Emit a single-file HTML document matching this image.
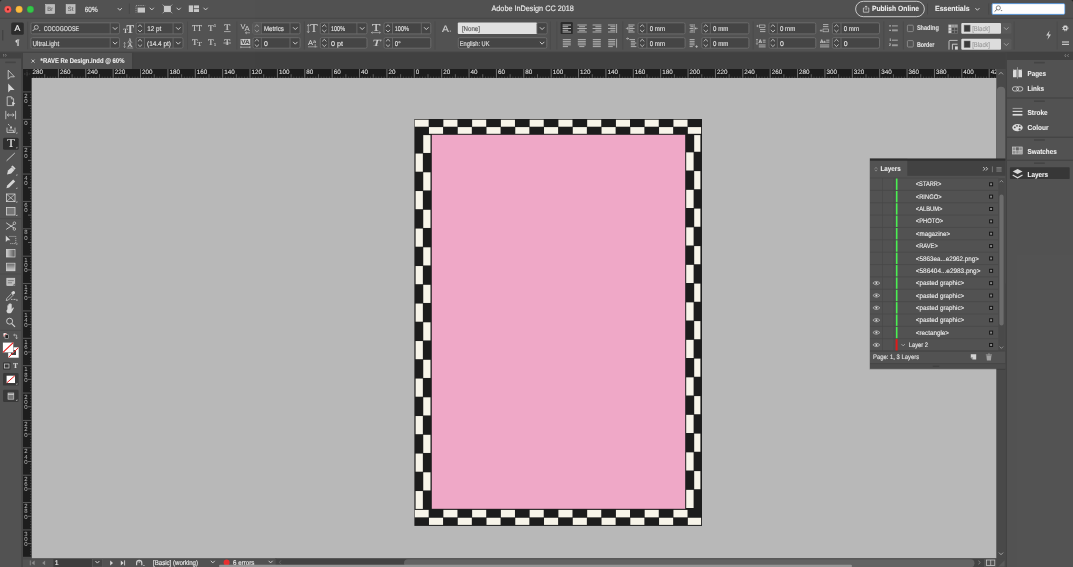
<!DOCTYPE html>
<html lang="en"><head><meta charset="utf-8"><title>Adobe InDesign CC 2018 - RAVE Re Design.indd</title>
<style>html,body{margin:0;padding:0;background:#535353;overflow:hidden}body{width:1073px;height:567px}svg{display:block;will-change:transform;opacity:0.999}text{font-family:"Liberation Sans", Arial, sans-serif;white-space:pre;text-rendering:geometricPrecision}</style></head><body>
<svg role="img" aria-label="Adobe InDesign CC 2018 workspace" width="1073" height="567" viewBox="0 0 1073 567">
<g id="base">
<rect x="0.00" y="0.00" width="1073.00" height="567.00" fill="#535353"/>
<rect x="0.00" y="52.30" width="1073.00" height="17.00" fill="#424242"/>
<rect x="31.50" y="77.90" width="965.00" height="480.70" fill="#b9b9b9"/>
</g>
<g id="page">
<rect x="414.40" y="119.00" width="287.60" height="406.90" fill="#1d1d1d"/>
<rect x="431.80" y="134.80" width="253.40" height="374.00" fill="#f0a9c8"/>
<rect x="414.80" y="119.70" width="13.88" height="7.00" fill="#f8f5ea"/>
<rect x="428.98" y="127.10" width="14.08" height="6.70" fill="#f8f5ea"/>
<rect x="443.36" y="119.70" width="14.08" height="7.00" fill="#f8f5ea"/>
<rect x="457.74" y="127.10" width="14.08" height="6.70" fill="#f8f5ea"/>
<rect x="472.12" y="119.70" width="14.08" height="7.00" fill="#f8f5ea"/>
<rect x="486.50" y="127.10" width="14.08" height="6.70" fill="#f8f5ea"/>
<rect x="500.88" y="119.70" width="14.08" height="7.00" fill="#f8f5ea"/>
<rect x="515.26" y="127.10" width="14.08" height="6.70" fill="#f8f5ea"/>
<rect x="529.64" y="119.70" width="14.08" height="7.00" fill="#f8f5ea"/>
<rect x="544.02" y="127.10" width="14.08" height="6.70" fill="#f8f5ea"/>
<rect x="558.40" y="119.70" width="14.08" height="7.00" fill="#f8f5ea"/>
<rect x="572.78" y="127.10" width="14.08" height="6.70" fill="#f8f5ea"/>
<rect x="587.16" y="119.70" width="14.08" height="7.00" fill="#f8f5ea"/>
<rect x="601.54" y="127.10" width="14.08" height="6.70" fill="#f8f5ea"/>
<rect x="615.92" y="119.70" width="14.08" height="7.00" fill="#f8f5ea"/>
<rect x="630.30" y="127.10" width="14.08" height="6.70" fill="#f8f5ea"/>
<rect x="644.68" y="119.70" width="14.08" height="7.00" fill="#f8f5ea"/>
<rect x="659.06" y="127.10" width="14.08" height="6.70" fill="#f8f5ea"/>
<rect x="673.44" y="119.70" width="14.08" height="7.00" fill="#f8f5ea"/>
<rect x="687.82" y="127.10" width="13.28" height="6.70" fill="#f8f5ea"/>
<rect x="414.80" y="509.90" width="13.88" height="7.45" fill="#f8f5ea"/>
<rect x="428.98" y="517.75" width="14.08" height="7.15" fill="#f8f5ea"/>
<rect x="443.36" y="509.90" width="14.08" height="7.45" fill="#f8f5ea"/>
<rect x="457.74" y="517.75" width="14.08" height="7.15" fill="#f8f5ea"/>
<rect x="472.12" y="509.90" width="14.08" height="7.45" fill="#f8f5ea"/>
<rect x="486.50" y="517.75" width="14.08" height="7.15" fill="#f8f5ea"/>
<rect x="500.88" y="509.90" width="14.08" height="7.45" fill="#f8f5ea"/>
<rect x="515.26" y="517.75" width="14.08" height="7.15" fill="#f8f5ea"/>
<rect x="529.64" y="509.90" width="14.08" height="7.45" fill="#f8f5ea"/>
<rect x="544.02" y="517.75" width="14.08" height="7.15" fill="#f8f5ea"/>
<rect x="558.40" y="509.90" width="14.08" height="7.45" fill="#f8f5ea"/>
<rect x="572.78" y="517.75" width="14.08" height="7.15" fill="#f8f5ea"/>
<rect x="587.16" y="509.90" width="14.08" height="7.45" fill="#f8f5ea"/>
<rect x="601.54" y="517.75" width="14.08" height="7.15" fill="#f8f5ea"/>
<rect x="615.92" y="509.90" width="14.08" height="7.45" fill="#f8f5ea"/>
<rect x="630.30" y="517.75" width="14.08" height="7.15" fill="#f8f5ea"/>
<rect x="644.68" y="509.90" width="14.08" height="7.45" fill="#f8f5ea"/>
<rect x="659.06" y="517.75" width="14.08" height="7.15" fill="#f8f5ea"/>
<rect x="673.44" y="509.90" width="14.08" height="7.45" fill="#f8f5ea"/>
<rect x="687.82" y="517.75" width="13.28" height="7.15" fill="#f8f5ea"/>
<rect x="423.25" y="135.10" width="7.25" height="17.85" fill="#f8f5ea"/>
<rect x="415.60" y="153.55" width="7.25" height="18.15" fill="#f8f5ea"/>
<rect x="423.25" y="172.30" width="7.25" height="18.15" fill="#f8f5ea"/>
<rect x="415.60" y="191.05" width="7.25" height="18.15" fill="#f8f5ea"/>
<rect x="423.25" y="209.80" width="7.25" height="18.15" fill="#f8f5ea"/>
<rect x="415.60" y="228.55" width="7.25" height="18.15" fill="#f8f5ea"/>
<rect x="423.25" y="247.30" width="7.25" height="18.15" fill="#f8f5ea"/>
<rect x="415.60" y="266.05" width="7.25" height="18.15" fill="#f8f5ea"/>
<rect x="423.25" y="284.80" width="7.25" height="18.15" fill="#f8f5ea"/>
<rect x="415.60" y="303.55" width="7.25" height="18.15" fill="#f8f5ea"/>
<rect x="423.25" y="322.30" width="7.25" height="18.15" fill="#f8f5ea"/>
<rect x="415.60" y="341.05" width="7.25" height="18.15" fill="#f8f5ea"/>
<rect x="423.25" y="359.80" width="7.25" height="18.15" fill="#f8f5ea"/>
<rect x="415.60" y="378.55" width="7.25" height="18.15" fill="#f8f5ea"/>
<rect x="423.25" y="397.30" width="7.25" height="18.15" fill="#f8f5ea"/>
<rect x="415.60" y="416.05" width="7.25" height="18.15" fill="#f8f5ea"/>
<rect x="423.25" y="434.80" width="7.25" height="18.15" fill="#f8f5ea"/>
<rect x="415.60" y="453.55" width="7.25" height="18.15" fill="#f8f5ea"/>
<rect x="423.25" y="472.30" width="7.25" height="18.15" fill="#f8f5ea"/>
<rect x="415.60" y="491.05" width="7.25" height="17.85" fill="#f8f5ea"/>
<rect x="694.20" y="135.10" width="6.20" height="16.65" fill="#f8f5ea"/>
<rect x="686.20" y="152.35" width="7.40" height="18.15" fill="#f8f5ea"/>
<rect x="694.20" y="171.10" width="6.20" height="18.15" fill="#f8f5ea"/>
<rect x="686.20" y="189.85" width="7.40" height="18.15" fill="#f8f5ea"/>
<rect x="694.20" y="208.60" width="6.20" height="18.15" fill="#f8f5ea"/>
<rect x="686.20" y="227.35" width="7.40" height="18.15" fill="#f8f5ea"/>
<rect x="694.20" y="246.10" width="6.20" height="18.15" fill="#f8f5ea"/>
<rect x="686.20" y="264.85" width="7.40" height="18.15" fill="#f8f5ea"/>
<rect x="694.20" y="283.60" width="6.20" height="18.15" fill="#f8f5ea"/>
<rect x="686.20" y="302.35" width="7.40" height="18.15" fill="#f8f5ea"/>
<rect x="694.20" y="321.10" width="6.20" height="18.15" fill="#f8f5ea"/>
<rect x="686.20" y="339.85" width="7.40" height="18.15" fill="#f8f5ea"/>
<rect x="694.20" y="358.60" width="6.20" height="18.15" fill="#f8f5ea"/>
<rect x="686.20" y="377.35" width="7.40" height="18.15" fill="#f8f5ea"/>
<rect x="694.20" y="396.10" width="6.20" height="18.15" fill="#f8f5ea"/>
<rect x="686.20" y="414.85" width="7.40" height="18.15" fill="#f8f5ea"/>
<rect x="694.20" y="433.60" width="6.20" height="18.15" fill="#f8f5ea"/>
<rect x="686.20" y="452.35" width="7.40" height="18.15" fill="#f8f5ea"/>
<rect x="694.20" y="471.10" width="6.20" height="18.15" fill="#f8f5ea"/>
<rect x="686.20" y="489.85" width="7.40" height="18.15" fill="#f8f5ea"/>
</g>
<defs><clipPath id="rc"><rect x="22.9" y="68.9" width="973.6" height="489.0"/></clipPath></defs>
<g id="rulers" clip-path="url(#rc)">
<rect x="22.90" y="68.90" width="973.60" height="9.00" fill="#1e1e1e"/>
<rect x="22.90" y="68.90" width="8.60" height="489.00" fill="#1e1e1e"/>
<path d="M58.41 69V77.9M85.79 69V77.9M113.16 69V77.9M140.54 69V77.9M167.92 69V77.9M195.29 69V77.9M222.67 69V77.9M250.04 69V77.9M277.42 69V77.9M304.80 69V77.9M332.17 69V77.9M359.55 69V77.9M386.92 69V77.9M414.30 69V77.9M441.68 69V77.9M469.05 69V77.9M496.43 69V77.9M523.80 69V77.9M551.18 69V77.9M578.56 69V77.9M605.93 69V77.9M633.31 69V77.9M660.68 69V77.9M688.06 69V77.9M715.44 69V77.9M742.81 69V77.9M770.19 69V77.9M797.56 69V77.9M824.94 69V77.9M852.32 69V77.9M879.69 69V77.9M907.07 69V77.9M934.44 69V77.9M961.82 69V77.9M989.20 69V77.9" fill="none" stroke="#858585" stroke-width="0.80"/>
<path d="M44.72 74.2V77.9M72.10 74.2V77.9M99.48 74.2V77.9M126.85 74.2V77.9M154.23 74.2V77.9M181.60 74.2V77.9M208.98 74.2V77.9M236.36 74.2V77.9M263.73 74.2V77.9M291.11 74.2V77.9M318.48 74.2V77.9M345.86 74.2V77.9M373.24 74.2V77.9M400.61 74.2V77.9M427.99 74.2V77.9M455.36 74.2V77.9M482.74 74.2V77.9M510.12 74.2V77.9M537.49 74.2V77.9M564.87 74.2V77.9M592.24 74.2V77.9M619.62 74.2V77.9M647.00 74.2V77.9M674.37 74.2V77.9M701.75 74.2V77.9M729.12 74.2V77.9M756.50 74.2V77.9M783.88 74.2V77.9M811.25 74.2V77.9M838.63 74.2V77.9M866.00 74.2V77.9M893.38 74.2V77.9M920.76 74.2V77.9M948.13 74.2V77.9M975.51 74.2V77.9" fill="none" stroke="#7a7a7a" stroke-width="0.70"/>
<path d="M33.77 76.6V77.9M36.51 76.6V77.9M39.25 76.6V77.9M41.99 76.6V77.9M47.46 76.6V77.9M50.20 76.6V77.9M52.94 76.6V77.9M55.67 76.6V77.9M61.15 76.6V77.9M63.89 76.6V77.9M66.62 76.6V77.9M69.36 76.6V77.9M74.84 76.6V77.9M77.58 76.6V77.9M80.31 76.6V77.9M83.05 76.6V77.9M88.53 76.6V77.9M91.26 76.6V77.9M94.00 76.6V77.9M96.74 76.6V77.9M102.21 76.6V77.9M104.95 76.6V77.9M107.69 76.6V77.9M110.43 76.6V77.9M115.90 76.6V77.9M118.64 76.6V77.9M121.38 76.6V77.9M124.11 76.6V77.9M129.59 76.6V77.9M132.33 76.6V77.9M135.06 76.6V77.9M137.80 76.6V77.9M143.28 76.6V77.9M146.02 76.6V77.9M148.75 76.6V77.9M151.49 76.6V77.9M156.97 76.6V77.9M159.70 76.6V77.9M162.44 76.6V77.9M165.18 76.6V77.9M170.65 76.6V77.9M173.39 76.6V77.9M176.13 76.6V77.9M178.87 76.6V77.9M184.34 76.6V77.9M187.08 76.6V77.9M189.82 76.6V77.9M192.55 76.6V77.9M198.03 76.6V77.9M200.77 76.6V77.9M203.50 76.6V77.9M206.24 76.6V77.9M211.72 76.6V77.9M214.46 76.6V77.9M217.19 76.6V77.9M219.93 76.6V77.9M225.41 76.6V77.9M228.14 76.6V77.9M230.88 76.6V77.9M233.62 76.6V77.9M239.09 76.6V77.9M241.83 76.6V77.9M244.57 76.6V77.9M247.31 76.6V77.9M252.78 76.6V77.9M255.52 76.6V77.9M258.26 76.6V77.9M260.99 76.6V77.9M266.47 76.6V77.9M269.21 76.6V77.9M271.94 76.6V77.9M274.68 76.6V77.9M280.16 76.6V77.9M282.90 76.6V77.9M285.63 76.6V77.9M288.37 76.6V77.9M293.85 76.6V77.9M296.58 76.6V77.9M299.32 76.6V77.9M302.06 76.6V77.9M307.53 76.6V77.9M310.27 76.6V77.9M313.01 76.6V77.9M315.75 76.6V77.9M321.22 76.6V77.9M323.96 76.6V77.9M326.70 76.6V77.9M329.43 76.6V77.9M334.91 76.6V77.9M337.65 76.6V77.9M340.38 76.6V77.9M343.12 76.6V77.9M348.60 76.6V77.9M351.34 76.6V77.9M354.07 76.6V77.9M356.81 76.6V77.9M362.29 76.6V77.9M365.02 76.6V77.9M367.76 76.6V77.9M370.50 76.6V77.9M375.97 76.6V77.9M378.71 76.6V77.9M381.45 76.6V77.9M384.19 76.6V77.9M389.66 76.6V77.9M392.40 76.6V77.9M395.14 76.6V77.9M397.87 76.6V77.9M403.35 76.6V77.9M406.09 76.6V77.9M408.82 76.6V77.9M411.56 76.6V77.9M417.04 76.6V77.9M419.78 76.6V77.9M422.51 76.6V77.9M425.25 76.6V77.9M430.73 76.6V77.9M433.46 76.6V77.9M436.20 76.6V77.9M438.94 76.6V77.9M444.41 76.6V77.9M447.15 76.6V77.9M449.89 76.6V77.9M452.63 76.6V77.9M458.10 76.6V77.9M460.84 76.6V77.9M463.58 76.6V77.9M466.31 76.6V77.9M471.79 76.6V77.9M474.53 76.6V77.9M477.26 76.6V77.9M480.00 76.6V77.9M485.48 76.6V77.9M488.22 76.6V77.9M490.95 76.6V77.9M493.69 76.6V77.9M499.17 76.6V77.9M501.90 76.6V77.9M504.64 76.6V77.9M507.38 76.6V77.9M512.85 76.6V77.9M515.59 76.6V77.9M518.33 76.6V77.9M521.07 76.6V77.9M526.54 76.6V77.9M529.28 76.6V77.9M532.02 76.6V77.9M534.75 76.6V77.9M540.23 76.6V77.9M542.97 76.6V77.9M545.70 76.6V77.9M548.44 76.6V77.9M553.92 76.6V77.9M556.66 76.6V77.9M559.39 76.6V77.9M562.13 76.6V77.9M567.61 76.6V77.9M570.34 76.6V77.9M573.08 76.6V77.9M575.82 76.6V77.9M581.29 76.6V77.9M584.03 76.6V77.9M586.77 76.6V77.9M589.51 76.6V77.9M594.98 76.6V77.9M597.72 76.6V77.9M600.46 76.6V77.9M603.19 76.6V77.9M608.67 76.6V77.9M611.41 76.6V77.9M614.14 76.6V77.9M616.88 76.6V77.9M622.36 76.6V77.9M625.10 76.6V77.9M627.83 76.6V77.9M630.57 76.6V77.9M636.05 76.6V77.9M638.78 76.6V77.9M641.52 76.6V77.9M644.26 76.6V77.9M649.73 76.6V77.9M652.47 76.6V77.9M655.21 76.6V77.9M657.95 76.6V77.9M663.42 76.6V77.9M666.16 76.6V77.9M668.90 76.6V77.9M671.63 76.6V77.9M677.11 76.6V77.9M679.85 76.6V77.9M682.58 76.6V77.9M685.32 76.6V77.9M690.80 76.6V77.9M693.54 76.6V77.9M696.27 76.6V77.9M699.01 76.6V77.9M704.49 76.6V77.9M707.22 76.6V77.9M709.96 76.6V77.9M712.70 76.6V77.9M718.17 76.6V77.9M720.91 76.6V77.9M723.65 76.6V77.9M726.39 76.6V77.9M731.86 76.6V77.9M734.60 76.6V77.9M737.34 76.6V77.9M740.07 76.6V77.9M745.55 76.6V77.9M748.29 76.6V77.9M751.02 76.6V77.9M753.76 76.6V77.9M759.24 76.6V77.9M761.98 76.6V77.9M764.71 76.6V77.9M767.45 76.6V77.9M772.93 76.6V77.9M775.66 76.6V77.9M778.40 76.6V77.9M781.14 76.6V77.9M786.61 76.6V77.9M789.35 76.6V77.9M792.09 76.6V77.9M794.83 76.6V77.9M800.30 76.6V77.9M803.04 76.6V77.9M805.78 76.6V77.9M808.51 76.6V77.9M813.99 76.6V77.9M816.73 76.6V77.9M819.46 76.6V77.9M822.20 76.6V77.9M827.68 76.6V77.9M830.42 76.6V77.9M833.15 76.6V77.9M835.89 76.6V77.9M841.37 76.6V77.9M844.10 76.6V77.9M846.84 76.6V77.9M849.58 76.6V77.9M855.05 76.6V77.9M857.79 76.6V77.9M860.53 76.6V77.9M863.27 76.6V77.9M868.74 76.6V77.9M871.48 76.6V77.9M874.22 76.6V77.9M876.95 76.6V77.9M882.43 76.6V77.9M885.17 76.6V77.9M887.90 76.6V77.9M890.64 76.6V77.9M896.12 76.6V77.9M898.86 76.6V77.9M901.59 76.6V77.9M904.33 76.6V77.9M909.81 76.6V77.9M912.54 76.6V77.9M915.28 76.6V77.9M918.02 76.6V77.9M923.49 76.6V77.9M926.23 76.6V77.9M928.97 76.6V77.9M931.71 76.6V77.9M937.18 76.6V77.9M939.92 76.6V77.9M942.66 76.6V77.9M945.39 76.6V77.9M950.87 76.6V77.9M953.61 76.6V77.9M956.34 76.6V77.9M959.08 76.6V77.9M964.56 76.6V77.9M967.30 76.6V77.9M970.03 76.6V77.9M972.77 76.6V77.9M978.25 76.6V77.9M980.98 76.6V77.9M983.72 76.6V77.9M986.46 76.6V77.9M991.93 76.6V77.9M994.67 76.6V77.9" fill="none" stroke="#6a6a6a" stroke-width="0.60"/>
<text x="32.54" y="74.31" font-size="6.30" fill="#e0e0e0" stroke="#e0e0e0" stroke-width="0.08">280</text>
<text x="59.91" y="74.31" font-size="6.30" fill="#e0e0e0" stroke="#e0e0e0" stroke-width="0.08">260</text>
<text x="87.29" y="74.31" font-size="6.30" fill="#e0e0e0" stroke="#e0e0e0" stroke-width="0.08">240</text>
<text x="114.66" y="74.31" font-size="6.30" fill="#e0e0e0" stroke="#e0e0e0" stroke-width="0.08">220</text>
<text x="142.04" y="74.31" font-size="6.30" fill="#e0e0e0" stroke="#e0e0e0" stroke-width="0.08">200</text>
<text x="169.42" y="74.31" font-size="6.30" fill="#e0e0e0" stroke="#e0e0e0" stroke-width="0.08">180</text>
<text x="196.79" y="74.31" font-size="6.30" fill="#e0e0e0" stroke="#e0e0e0" stroke-width="0.08">160</text>
<text x="224.17" y="74.31" font-size="6.30" fill="#e0e0e0" stroke="#e0e0e0" stroke-width="0.08">140</text>
<text x="251.54" y="74.31" font-size="6.30" fill="#e0e0e0" stroke="#e0e0e0" stroke-width="0.08">120</text>
<text x="278.92" y="74.31" font-size="6.30" fill="#e0e0e0" stroke="#e0e0e0" stroke-width="0.08">100</text>
<text x="306.30" y="74.31" font-size="6.30" fill="#e0e0e0" stroke="#e0e0e0" stroke-width="0.08">80</text>
<text x="333.67" y="74.31" font-size="6.30" fill="#e0e0e0" stroke="#e0e0e0" stroke-width="0.08">60</text>
<text x="361.05" y="74.31" font-size="6.30" fill="#e0e0e0" stroke="#e0e0e0" stroke-width="0.08">40</text>
<text x="388.42" y="74.31" font-size="6.30" fill="#e0e0e0" stroke="#e0e0e0" stroke-width="0.08">20</text>
<text x="415.80" y="74.31" font-size="6.30" fill="#e0e0e0" stroke="#e0e0e0" stroke-width="0.08">0</text>
<text x="443.18" y="74.31" font-size="6.30" fill="#e0e0e0" stroke="#e0e0e0" stroke-width="0.08">20</text>
<text x="470.55" y="74.31" font-size="6.30" fill="#e0e0e0" stroke="#e0e0e0" stroke-width="0.08">40</text>
<text x="497.93" y="74.31" font-size="6.30" fill="#e0e0e0" stroke="#e0e0e0" stroke-width="0.08">60</text>
<text x="525.30" y="74.31" font-size="6.30" fill="#e0e0e0" stroke="#e0e0e0" stroke-width="0.08">80</text>
<text x="552.68" y="74.31" font-size="6.30" fill="#e0e0e0" stroke="#e0e0e0" stroke-width="0.08">100</text>
<text x="580.06" y="74.31" font-size="6.30" fill="#e0e0e0" stroke="#e0e0e0" stroke-width="0.08">120</text>
<text x="607.43" y="74.31" font-size="6.30" fill="#e0e0e0" stroke="#e0e0e0" stroke-width="0.08">140</text>
<text x="634.81" y="74.31" font-size="6.30" fill="#e0e0e0" stroke="#e0e0e0" stroke-width="0.08">160</text>
<text x="662.18" y="74.31" font-size="6.30" fill="#e0e0e0" stroke="#e0e0e0" stroke-width="0.08">180</text>
<text x="689.56" y="74.31" font-size="6.30" fill="#e0e0e0" stroke="#e0e0e0" stroke-width="0.08">200</text>
<text x="716.94" y="74.31" font-size="6.30" fill="#e0e0e0" stroke="#e0e0e0" stroke-width="0.08">220</text>
<text x="744.31" y="74.31" font-size="6.30" fill="#e0e0e0" stroke="#e0e0e0" stroke-width="0.08">240</text>
<text x="771.69" y="74.31" font-size="6.30" fill="#e0e0e0" stroke="#e0e0e0" stroke-width="0.08">260</text>
<text x="799.06" y="74.31" font-size="6.30" fill="#e0e0e0" stroke="#e0e0e0" stroke-width="0.08">280</text>
<text x="826.44" y="74.31" font-size="6.30" fill="#e0e0e0" stroke="#e0e0e0" stroke-width="0.08">300</text>
<text x="853.82" y="74.31" font-size="6.30" fill="#e0e0e0" stroke="#e0e0e0" stroke-width="0.08">320</text>
<text x="881.19" y="74.31" font-size="6.30" fill="#e0e0e0" stroke="#e0e0e0" stroke-width="0.08">340</text>
<text x="908.57" y="74.31" font-size="6.30" fill="#e0e0e0" stroke="#e0e0e0" stroke-width="0.08">360</text>
<text x="935.94" y="74.31" font-size="6.30" fill="#e0e0e0" stroke="#e0e0e0" stroke-width="0.08">380</text>
<text x="963.32" y="74.31" font-size="6.30" fill="#e0e0e0" stroke="#e0e0e0" stroke-width="0.08">400</text>
<text x="990.70" y="74.31" font-size="6.30" fill="#e0e0e0" stroke="#e0e0e0" stroke-width="0.08">420</text>
<path d="M23 91.92H31.5M23 119.30H31.5M23 146.68H31.5M23 174.05H31.5M23 201.43H31.5M23 228.80H31.5M23 256.18H31.5M23 283.56H31.5M23 310.93H31.5M23 338.31H31.5M23 365.68H31.5M23 393.06H31.5M23 420.44H31.5M23 447.81H31.5M23 475.19H31.5M23 502.56H31.5M23 529.94H31.5M23 557.32H31.5" fill="none" stroke="#686868" stroke-width="0.80"/>
<path d="M28 105.61H31.5M28 132.99H31.5M28 160.36H31.5M28 187.74H31.5M28 215.12H31.5M28 242.49H31.5M28 269.87H31.5M28 297.24H31.5M28 324.62H31.5M28 352.00H31.5M28 379.37H31.5M28 406.75H31.5M28 434.12H31.5M28 461.50H31.5M28 488.88H31.5M28 516.25H31.5M28 543.63H31.5" fill="none" stroke="#8a8a8a" stroke-width="0.70"/>
<path d="M30.2 94.66H31.5M30.2 97.40H31.5M30.2 100.14H31.5M30.2 102.87H31.5M30.2 108.35H31.5M30.2 111.09H31.5M30.2 113.82H31.5M30.2 116.56H31.5M30.2 122.04H31.5M30.2 124.78H31.5M30.2 127.51H31.5M30.2 130.25H31.5M30.2 135.73H31.5M30.2 138.46H31.5M30.2 141.20H31.5M30.2 143.94H31.5M30.2 149.41H31.5M30.2 152.15H31.5M30.2 154.89H31.5M30.2 157.63H31.5M30.2 163.10H31.5M30.2 165.84H31.5M30.2 168.58H31.5M30.2 171.31H31.5M30.2 176.79H31.5M30.2 179.53H31.5M30.2 182.26H31.5M30.2 185.00H31.5M30.2 190.48H31.5M30.2 193.22H31.5M30.2 195.95H31.5M30.2 198.69H31.5M30.2 204.17H31.5M30.2 206.90H31.5M30.2 209.64H31.5M30.2 212.38H31.5M30.2 217.85H31.5M30.2 220.59H31.5M30.2 223.33H31.5M30.2 226.07H31.5M30.2 231.54H31.5M30.2 234.28H31.5M30.2 237.02H31.5M30.2 239.75H31.5M30.2 245.23H31.5M30.2 247.97H31.5M30.2 250.70H31.5M30.2 253.44H31.5M30.2 258.92H31.5M30.2 261.66H31.5M30.2 264.39H31.5M30.2 267.13H31.5M30.2 272.61H31.5M30.2 275.34H31.5M30.2 278.08H31.5M30.2 280.82H31.5M30.2 286.29H31.5M30.2 289.03H31.5M30.2 291.77H31.5M30.2 294.51H31.5M30.2 299.98H31.5M30.2 302.72H31.5M30.2 305.46H31.5M30.2 308.19H31.5M30.2 313.67H31.5M30.2 316.41H31.5M30.2 319.14H31.5M30.2 321.88H31.5M30.2 327.36H31.5M30.2 330.10H31.5M30.2 332.83H31.5M30.2 335.57H31.5M30.2 341.05H31.5M30.2 343.78H31.5M30.2 346.52H31.5M30.2 349.26H31.5M30.2 354.73H31.5M30.2 357.47H31.5M30.2 360.21H31.5M30.2 362.95H31.5M30.2 368.42H31.5M30.2 371.16H31.5M30.2 373.90H31.5M30.2 376.63H31.5M30.2 382.11H31.5M30.2 384.85H31.5M30.2 387.58H31.5M30.2 390.32H31.5M30.2 395.80H31.5M30.2 398.54H31.5M30.2 401.27H31.5M30.2 404.01H31.5M30.2 409.49H31.5M30.2 412.22H31.5M30.2 414.96H31.5M30.2 417.70H31.5M30.2 423.17H31.5M30.2 425.91H31.5M30.2 428.65H31.5M30.2 431.39H31.5M30.2 436.86H31.5M30.2 439.60H31.5M30.2 442.34H31.5M30.2 445.07H31.5M30.2 450.55H31.5M30.2 453.29H31.5M30.2 456.02H31.5M30.2 458.76H31.5M30.2 464.24H31.5M30.2 466.98H31.5M30.2 469.71H31.5M30.2 472.45H31.5M30.2 477.93H31.5M30.2 480.66H31.5M30.2 483.40H31.5M30.2 486.14H31.5M30.2 491.61H31.5M30.2 494.35H31.5M30.2 497.09H31.5M30.2 499.83H31.5M30.2 505.30H31.5M30.2 508.04H31.5M30.2 510.78H31.5M30.2 513.51H31.5M30.2 518.99H31.5M30.2 521.73H31.5M30.2 524.46H31.5M30.2 527.20H31.5M30.2 532.68H31.5M30.2 535.42H31.5M30.2 538.15H31.5M30.2 540.89H31.5M30.2 546.37H31.5M30.2 549.10H31.5M30.2 551.84H31.5M30.2 554.58H31.5" fill="none" stroke="#707070" stroke-width="0.60"/>
<text x="24.20" y="97.52" font-size="6.00" fill="#bcbcbc">2</text>
<text x="24.20" y="102.82" font-size="6.00" fill="#bcbcbc">0</text>
<text x="24.20" y="124.90" font-size="6.00" fill="#bcbcbc">0</text>
<text x="24.20" y="152.27" font-size="6.00" fill="#bcbcbc">2</text>
<text x="24.20" y="157.57" font-size="6.00" fill="#bcbcbc">0</text>
<text x="24.20" y="179.65" font-size="6.00" fill="#bcbcbc">4</text>
<text x="24.20" y="184.95" font-size="6.00" fill="#bcbcbc">0</text>
<text x="24.20" y="207.03" font-size="6.00" fill="#bcbcbc">6</text>
<text x="24.20" y="212.33" font-size="6.00" fill="#bcbcbc">0</text>
<text x="24.20" y="234.40" font-size="6.00" fill="#bcbcbc">8</text>
<text x="24.20" y="239.70" font-size="6.00" fill="#bcbcbc">0</text>
<text x="24.20" y="261.78" font-size="6.00" fill="#bcbcbc">1</text>
<text x="24.20" y="267.08" font-size="6.00" fill="#bcbcbc">0</text>
<text x="24.20" y="272.38" font-size="6.00" fill="#bcbcbc">0</text>
<text x="24.20" y="289.15" font-size="6.00" fill="#bcbcbc">1</text>
<text x="24.20" y="294.45" font-size="6.00" fill="#bcbcbc">2</text>
<text x="24.20" y="299.75" font-size="6.00" fill="#bcbcbc">0</text>
<text x="24.20" y="316.53" font-size="6.00" fill="#bcbcbc">1</text>
<text x="24.20" y="321.83" font-size="6.00" fill="#bcbcbc">4</text>
<text x="24.20" y="327.13" font-size="6.00" fill="#bcbcbc">0</text>
<text x="24.20" y="343.91" font-size="6.00" fill="#bcbcbc">1</text>
<text x="24.20" y="349.21" font-size="6.00" fill="#bcbcbc">6</text>
<text x="24.20" y="354.51" font-size="6.00" fill="#bcbcbc">0</text>
<text x="24.20" y="371.28" font-size="6.00" fill="#bcbcbc">1</text>
<text x="24.20" y="376.58" font-size="6.00" fill="#bcbcbc">8</text>
<text x="24.20" y="381.88" font-size="6.00" fill="#bcbcbc">0</text>
<text x="24.20" y="398.66" font-size="6.00" fill="#bcbcbc">2</text>
<text x="24.20" y="403.96" font-size="6.00" fill="#bcbcbc">0</text>
<text x="24.20" y="409.26" font-size="6.00" fill="#bcbcbc">0</text>
<text x="24.20" y="426.03" font-size="6.00" fill="#bcbcbc">2</text>
<text x="24.20" y="431.33" font-size="6.00" fill="#bcbcbc">2</text>
<text x="24.20" y="436.63" font-size="6.00" fill="#bcbcbc">0</text>
<text x="24.20" y="453.41" font-size="6.00" fill="#bcbcbc">2</text>
<text x="24.20" y="458.71" font-size="6.00" fill="#bcbcbc">4</text>
<text x="24.20" y="464.01" font-size="6.00" fill="#bcbcbc">0</text>
<text x="24.20" y="480.79" font-size="6.00" fill="#bcbcbc">2</text>
<text x="24.20" y="486.09" font-size="6.00" fill="#bcbcbc">6</text>
<text x="24.20" y="491.39" font-size="6.00" fill="#bcbcbc">0</text>
<text x="24.20" y="508.16" font-size="6.00" fill="#bcbcbc">2</text>
<text x="24.20" y="513.46" font-size="6.00" fill="#bcbcbc">8</text>
<text x="24.20" y="518.76" font-size="6.00" fill="#bcbcbc">0</text>
<text x="24.20" y="535.54" font-size="6.00" fill="#bcbcbc">3</text>
<text x="24.20" y="540.84" font-size="6.00" fill="#bcbcbc">0</text>
<text x="24.20" y="546.14" font-size="6.00" fill="#bcbcbc">0</text>
<rect x="22.90" y="68.90" width="8.60" height="9.00" fill="#1e1e1e"/>
<path d="M27 70.5V77 M24 74H30.5" fill="none" stroke="#777" stroke-width="0.50" stroke-dasharray="0.8 0.8"/>
</g>
<g id="titlebar">
<rect x="0.00" y="0.00" width="1073.00" height="18.20" fill="#525252"/>
<line x1="0.00" y1="18.40" x2="1073.00" y2="18.40" stroke="#444444" stroke-width="0.80"/>
<path d="M0 0h2.2q-2.2 0-2.2 2.2z" fill="#1a1a1a"/>
<path d="M1073 0h-2.2q2.2 0 2.2 2.2z" fill="#1a1a1a"/>
<circle cx="7.9" cy="9.4" r="3.3" fill="#fc5b57" stroke="#e0443e" stroke-width="0.4"/>
<circle cx="7.9" cy="9.4" r="1.1" fill="#7d1512"/>
<circle cx="19.1" cy="9.4" r="3.3" fill="#fdbc40" stroke="#dfa023" stroke-width="0.4"/>
<circle cx="30.4" cy="9.4" r="3.3" fill="#34c84a" stroke="#27aa35" stroke-width="0.4"/>
<rect x="45.70" y="4.50" width="9.00" height="9.00" fill="#bdbdbd" stroke="#d4d4d4" stroke-width="0.50"/>
<text x="47.20" y="11.06" font-size="6.30" fill="#6e6e6e" font-weight="bold" textLength="6.00" lengthAdjust="spacingAndGlyphs">Br</text>
<rect x="66.10" y="4.50" width="9.00" height="9.00" fill="#bdbdbd" stroke="#d4d4d4" stroke-width="0.50"/>
<text x="67.80" y="11.06" font-size="6.30" fill="#6e6e6e" font-weight="bold" textLength="5.80" lengthAdjust="spacingAndGlyphs">St</text>
<text x="84.80" y="11.82" font-size="7.60" fill="#f0f0f0" stroke="#f0f0f0" stroke-width="0.13" textLength="12.80" lengthAdjust="spacingAndGlyphs">60%</text>
<path d="M118.00 8.35 L119.80 10.25 L121.60 8.35" fill="none" stroke="#d8d8d8" stroke-width="0.90" stroke-linecap="round" stroke-linejoin="round"/>
<line x1="129.40" y1="3.50" x2="129.40" y2="14.00" stroke="#444" stroke-width="0.70"/>
<path d="M137.6 7.6h7.4v5h-7.4z" fill="#c8c8c8"/>
<path d="M136 5.5h9.2" fill="none" stroke="#c8c8c8" stroke-width="0.60" stroke-dasharray="1 0.8"/>
<path d="M136 6.4v6.2" fill="none" stroke="#c8c8c8" stroke-width="0.60" stroke-dasharray="1 0.8"/>
<path d="M150.00 8.05 L151.80 9.95 L153.60 8.05" fill="none" stroke="#d8d8d8" stroke-width="0.90" stroke-linecap="round" stroke-linejoin="round"/>
<rect x="163.90" y="5.80" width="7.00" height="6.30" fill="#c8c8c8"/>
<path d="M162.6 4.6l1.3 1.3 M172.2 4.6l-1.3 1.3 M172.2 13.3l-1.3-1.3 M162.6 13.3l1.3-1.3" fill="none" stroke="#c8c8c8" stroke-width="0.70"/>
<path d="M176.90 8.05 L178.70 9.95 L180.50 8.05" fill="none" stroke="#d8d8d8" stroke-width="0.90" stroke-linecap="round" stroke-linejoin="round"/>
<rect x="188.80" y="5.40" width="4.20" height="6.60" fill="#c8c8c8"/>
<rect x="193.80" y="5.40" width="5.20" height="2.90" fill="#c8c8c8"/>
<rect x="193.80" y="9.10" width="5.20" height="2.90" fill="#c8c8c8"/>
<path d="M203.80 8.05 L205.60 9.95 L207.40 8.05" fill="none" stroke="#d8d8d8" stroke-width="0.90" stroke-linecap="round" stroke-linejoin="round"/>
<text x="491.50" y="11.23" font-size="7.90" fill="#ededed" stroke="#ededed" stroke-width="0.13" textLength="82.30" lengthAdjust="spacingAndGlyphs">Adobe InDesign CC 2018</text>
<rect x="855.60" y="1.30" width="68.80" height="15.40" fill="none" rx="7.70" stroke="#d4d4d4" stroke-width="0.90"/>
<path d="M864.6 8.0h-1.2v4.2h5.4v-4.2h-1.2 M866.1 10.2V6.0 M864.9 7.1l1.2-1.2 1.2 1.2" fill="none" stroke="#e0e0e0" stroke-width="0.70"/>
<text x="871.90" y="11.32" font-size="7.60" fill="#f0f0f0" stroke="#f0f0f0" stroke-width="0.08" font-weight="bold" textLength="47.10" lengthAdjust="spacingAndGlyphs">Publish Online</text>
<line x1="927.50" y1="3.50" x2="927.50" y2="14.50" stroke="#454545" stroke-width="0.70"/>
<text x="935.00" y="11.32" font-size="7.60" fill="#f0f0f0" stroke="#f0f0f0" stroke-width="0.08" font-weight="bold" textLength="34.60" lengthAdjust="spacingAndGlyphs">Essentials</text>
<path d="M975.60 8.35 L977.40 10.25 L979.20 8.35" fill="none" stroke="#d8d8d8" stroke-width="0.90" stroke-linecap="round" stroke-linejoin="round"/>
<line x1="988.70" y1="3.50" x2="988.70" y2="14.50" stroke="#454545" stroke-width="0.70"/>
<rect x="992.00" y="3.60" width="72.60" height="10.80" fill="#ffffff" rx="1.20" stroke="#4d8fd6" stroke-width="0.90"/>
<line x1="1064.60" y1="4.40" x2="1064.60" y2="13.60" stroke="#a9d0fb" stroke-width="0.90"/>
<circle cx="998.3" cy="7.9" r="2.1" fill="none" stroke="#555" stroke-width="0.7"/>
<line x1="996.80" y1="9.50" x2="994.60" y2="11.60" stroke="#555" stroke-width="0.90"/>
<path d="M1000.6 10.2h1.9l-0.95 1z" fill="#555"/>
</g>
<g id="controlpanel">
<rect x="0.00" y="18.80" width="1073.00" height="33.50" fill="#535353"/>
<line x1="0.00" y1="52.20" x2="1073.00" y2="52.20" stroke="#404040" stroke-width="0.80"/>
<line x1="2.80" y1="30.00" x2="2.80" y2="40.50" stroke="#3c3c3c" stroke-width="0.90"/>
<rect x="11.20" y="22.40" width="12.60" height="12.40" fill="#2d2d2d" rx="1.50"/>
<text x="14.60" y="31.24" font-size="8.20" fill="#f4f4f4" stroke="#f4f4f4" stroke-width="0.13" textLength="5.80" lengthAdjust="spacingAndGlyphs">A</text>
<text x="15.20" y="45.49" font-size="7.50" fill="#dcdcdc" stroke="#dcdcdc" stroke-width="0.13" textLength="4.40" lengthAdjust="spacingAndGlyphs">¶</text>
<line x1="27.60" y1="21.50" x2="27.60" y2="49.50" stroke="#494949" stroke-width="0.70"/>
<rect x="30.90" y="22.80" width="88.60" height="11.10" fill="#464646" rx="1.50" stroke="#6e6e6e" stroke-width="0.95"/>
<line x1="110.20" y1="22.80" x2="110.20" y2="33.90" stroke="#6e6e6e" stroke-width="0.80"/>
<path d="M113.15 27.55 L115.10 29.55 L117.05 27.55" fill="none" stroke="#d8d8d8" stroke-width="0.90" stroke-linecap="round" stroke-linejoin="round"/>
<circle cx="36.3" cy="27.3" r="2.0" fill="none" stroke="#dcdcdc" stroke-width="0.7"/>
<line x1="34.80" y1="28.80" x2="32.60" y2="31.00" stroke="#dcdcdc" stroke-width="0.90"/>
<path d="M38.8 30.3h1.8l-0.9 0.9z" fill="#dcdcdc"/>
<text x="43.80" y="30.82" font-size="6.90" fill="#e4e4e4" stroke="#e4e4e4" stroke-width="0.13" textLength="35.20" lengthAdjust="spacingAndGlyphs">COCOGOOSE</text>
<rect x="30.90" y="37.70" width="88.60" height="10.50" fill="#464646" rx="1.50" stroke="#6e6e6e" stroke-width="0.95"/>
<line x1="110.20" y1="37.70" x2="110.20" y2="48.20" stroke="#6e6e6e" stroke-width="0.80"/>
<path d="M113.15 42.15 L115.10 44.15 L117.05 42.15" fill="none" stroke="#d8d8d8" stroke-width="0.90" stroke-linecap="round" stroke-linejoin="round"/>
<text x="32.60" y="45.96" font-size="7.00" fill="#e4e4e4" stroke="#e4e4e4" stroke-width="0.13" textLength="26.60" lengthAdjust="spacingAndGlyphs">UltraLight</text>
<text x="123.20" y="32.78" font-size="6.60" fill="#d0d0d0" stroke="#d0d0d0" stroke-width="0.08" font-weight="bold" style='font-family:"Liberation Serif", serif' textLength="4.50" lengthAdjust="spacingAndGlyphs">T</text>
<text x="126.40" y="32.71" font-size="12.00" fill="#d0d0d0" stroke="#d0d0d0" stroke-width="0.08" font-weight="bold" style='font-family:"Liberation Serif", serif' textLength="7.50" lengthAdjust="spacingAndGlyphs">T</text>
<text x="128.20" y="42.08" font-size="5.40" fill="#d0d0d0" stroke="#d0d0d0" stroke-width="0.13" style='font-family:"Liberation Serif", serif' textLength="3.30" lengthAdjust="spacingAndGlyphs">A</text>
<text x="127.40" y="47.48" font-size="6.00" fill="#d0d0d0" stroke="#d0d0d0" stroke-width="0.13" style='font-family:"Liberation Serif", serif' textLength="5.10" lengthAdjust="spacingAndGlyphs">A</text>
<path d="M124.6 42.4v5.2 M123.7 43.5l0.9-1.1 0.9 1.1 M123.7 46.5l0.9 1.1 0.9-1.1" fill="none" stroke="#d0d0d0" stroke-width="0.50"/>
<path d="M127.4 42.7h5.0 M126.6 48.0h6.6" fill="none" stroke="#d0d0d0" stroke-width="0.50"/>
<rect x="136.10" y="22.80" width="46.90" height="11.10" fill="#464646" rx="1.50" stroke="#6e6e6e" stroke-width="0.95"/>
<line x1="144.40" y1="22.80" x2="144.40" y2="33.90" stroke="#6e6e6e" stroke-width="0.80"/>
<path d="M138.15 26.55 L140.00 24.75 L141.85 26.55" fill="none" stroke="#d8d8d8" stroke-width="0.80" stroke-linecap="round" stroke-linejoin="round"/>
<path d="M138.15 30.15 L140.00 31.95 L141.85 30.15" fill="none" stroke="#d8d8d8" stroke-width="0.80" stroke-linecap="round" stroke-linejoin="round"/>
<line x1="173.10" y1="22.80" x2="173.10" y2="33.90" stroke="#6e6e6e" stroke-width="0.80"/>
<path d="M176.35 27.55 L178.30 29.55 L180.25 27.55" fill="none" stroke="#d8d8d8" stroke-width="0.90" stroke-linecap="round" stroke-linejoin="round"/>
<text x="147.30" y="30.82" font-size="6.90" fill="#e4e4e4" stroke="#e4e4e4" stroke-width="0.13" textLength="14.00" lengthAdjust="spacingAndGlyphs">12 pt</text>
<rect x="136.10" y="37.70" width="46.90" height="10.50" fill="#464646" rx="1.50" stroke="#6e6e6e" stroke-width="0.95"/>
<line x1="144.40" y1="37.70" x2="144.40" y2="48.20" stroke="#6e6e6e" stroke-width="0.80"/>
<path d="M138.15 41.15 L140.00 39.35 L141.85 41.15" fill="none" stroke="#d8d8d8" stroke-width="0.80" stroke-linecap="round" stroke-linejoin="round"/>
<path d="M138.15 44.75 L140.00 46.55 L141.85 44.75" fill="none" stroke="#d8d8d8" stroke-width="0.80" stroke-linecap="round" stroke-linejoin="round"/>
<line x1="173.10" y1="37.70" x2="173.10" y2="48.20" stroke="#6e6e6e" stroke-width="0.80"/>
<path d="M176.35 42.15 L178.30 44.15 L180.25 42.15" fill="none" stroke="#d8d8d8" stroke-width="0.90" stroke-linecap="round" stroke-linejoin="round"/>
<text x="147.00" y="45.82" font-size="6.90" fill="#e4e4e4" stroke="#e4e4e4" stroke-width="0.13" textLength="24.00" lengthAdjust="spacingAndGlyphs">(14.4 pt)</text>
<line x1="187.50" y1="21.50" x2="187.50" y2="49.50" stroke="#494949" stroke-width="0.70"/>
<text x="191.90" y="30.60" font-size="9.10" fill="#d0d0d0" stroke="#d0d0d0" stroke-width="0.13" style='font-family:"Liberation Serif", serif' textLength="10.00" lengthAdjust="spacingAndGlyphs">TT</text>
<text x="208.00" y="30.64" font-size="8.60" fill="#d0d0d0" stroke="#d0d0d0" stroke-width="0.13" style='font-family:"Liberation Serif", serif' textLength="5.60" lengthAdjust="spacingAndGlyphs">T</text>
<text x="214.00" y="26.92" font-size="4.00" fill="#d0d0d0" stroke="#d0d0d0" stroke-width="0.13" style='font-family:"Liberation Serif", serif' textLength="2.00" lengthAdjust="spacingAndGlyphs">1</text>
<text x="224.20" y="30.24" font-size="8.60" fill="#d0d0d0" stroke="#d0d0d0" stroke-width="0.13" style='font-family:"Liberation Serif", serif' textLength="6.00" lengthAdjust="spacingAndGlyphs">T</text>
<line x1="224.00" y1="31.60" x2="230.60" y2="31.60" stroke="#d0d0d0" stroke-width="0.70"/>
<text x="191.90" y="45.44" font-size="8.60" fill="#d0d0d0" stroke="#d0d0d0" stroke-width="0.13" style='font-family:"Liberation Serif", serif' textLength="5.50" lengthAdjust="spacingAndGlyphs">T</text>
<text x="197.60" y="45.55" font-size="6.20" fill="#d0d0d0" stroke="#d0d0d0" stroke-width="0.13" style='font-family:"Liberation Serif", serif' textLength="4.30" lengthAdjust="spacingAndGlyphs">T</text>
<text x="208.00" y="45.44" font-size="8.60" fill="#d0d0d0" stroke="#d0d0d0" stroke-width="0.13" style='font-family:"Liberation Serif", serif' textLength="5.60" lengthAdjust="spacingAndGlyphs">T</text>
<text x="214.00" y="46.32" font-size="4.00" fill="#d0d0d0" stroke="#d0d0d0" stroke-width="0.13" style='font-family:"Liberation Serif", serif' textLength="2.00" lengthAdjust="spacingAndGlyphs">1</text>
<text x="224.20" y="45.44" font-size="8.60" fill="#d0d0d0" stroke="#d0d0d0" stroke-width="0.13" style='font-family:"Liberation Serif", serif' textLength="6.00" lengthAdjust="spacingAndGlyphs">T</text>
<line x1="223.40" y1="43.00" x2="231.00" y2="43.00" stroke="#d0d0d0" stroke-width="0.70"/>
<line x1="236.90" y1="21.50" x2="236.90" y2="49.50" stroke="#494949" stroke-width="0.70"/>
<text x="240.40" y="29.38" font-size="7.20" fill="#d0d0d0" textLength="5.00" lengthAdjust="spacingAndGlyphs">V</text>
<text x="244.60" y="30.78" font-size="7.20" fill="#d0d0d0" textLength="5.20" lengthAdjust="spacingAndGlyphs">A</text>
<path d="M245.6 32.8h4.4 M246.8 31.7l-1.4 1.1 1.4 1.1" fill="none" stroke="#d0d0d0" stroke-width="0.60"/>
<rect x="252.50" y="22.30" width="8.80" height="12.10" fill="#5a5a5a" rx="1.50"/>
<rect x="253.00" y="22.80" width="47.10" height="11.10" fill="#464646" rx="1.50" stroke="#6e6e6e" stroke-width="0.95"/>
<line x1="261.30" y1="22.80" x2="261.30" y2="33.90" stroke="#6e6e6e" stroke-width="0.80"/>
<path d="M255.05 26.55 L256.90 24.75 L258.75 26.55" fill="none" stroke="#d8d8d8" stroke-width="0.80" stroke-linecap="round" stroke-linejoin="round"/>
<path d="M255.05 30.15 L256.90 31.95 L258.75 30.15" fill="none" stroke="#d8d8d8" stroke-width="0.80" stroke-linecap="round" stroke-linejoin="round"/>
<line x1="290.00" y1="22.80" x2="290.00" y2="33.90" stroke="#6e6e6e" stroke-width="0.80"/>
<path d="M293.35 27.55 L295.30 29.55 L297.25 27.55" fill="none" stroke="#d8d8d8" stroke-width="0.90" stroke-linecap="round" stroke-linejoin="round"/>
<rect x="252.90" y="22.80" width="8.00" height="11.10" fill="#595959" rx="1.20"/>
<path d="M255.05 26.55 L256.90 24.75 L258.75 26.55" fill="none" stroke="#a8a8a8" stroke-width="0.80" stroke-linecap="round" stroke-linejoin="round"/>
<path d="M255.05 30.15 L256.90 31.95 L258.75 30.15" fill="none" stroke="#a8a8a8" stroke-width="0.80" stroke-linecap="round" stroke-linejoin="round"/>
<text x="264.00" y="30.82" font-size="6.90" fill="#e4e4e4" stroke="#e4e4e4" stroke-width="0.13" textLength="19.80" lengthAdjust="spacingAndGlyphs">Metrics</text>
<rect x="240.60" y="39.00" width="9.60" height="6.00" fill="#c8c8c8"/>
<text x="241.20" y="43.85" font-size="6.00" fill="#4a4a4a" stroke="#4a4a4a" stroke-width="0.08" font-weight="bold" textLength="8.40" lengthAdjust="spacingAndGlyphs">VA</text>
<path d="M240.8 47.2h9.2 M240.8 46.2v2 M250 46.2v2" fill="none" stroke="#d0d0d0" stroke-width="0.60"/>
<rect x="253.00" y="37.70" width="47.10" height="10.50" fill="#464646" rx="1.50" stroke="#6e6e6e" stroke-width="0.95"/>
<line x1="261.30" y1="37.70" x2="261.30" y2="48.20" stroke="#6e6e6e" stroke-width="0.80"/>
<path d="M255.05 41.15 L256.90 39.35 L258.75 41.15" fill="none" stroke="#d8d8d8" stroke-width="0.80" stroke-linecap="round" stroke-linejoin="round"/>
<path d="M255.05 44.75 L256.90 46.55 L258.75 44.75" fill="none" stroke="#d8d8d8" stroke-width="0.80" stroke-linecap="round" stroke-linejoin="round"/>
<line x1="290.00" y1="37.70" x2="290.00" y2="48.20" stroke="#6e6e6e" stroke-width="0.80"/>
<path d="M293.35 42.15 L295.30 44.15 L297.25 42.15" fill="none" stroke="#d8d8d8" stroke-width="0.90" stroke-linecap="round" stroke-linejoin="round"/>
<text x="264.00" y="45.82" font-size="6.90" fill="#e4e4e4" stroke="#e4e4e4" stroke-width="0.13">0</text>
<line x1="304.40" y1="21.50" x2="304.40" y2="49.50" stroke="#494949" stroke-width="0.70"/>
<text x="310.20" y="32.06" font-size="12.00" fill="#d0d0d0" stroke="#d0d0d0" stroke-width="0.13" style='font-family:"Liberation Serif", serif' textLength="7.40" lengthAdjust="spacingAndGlyphs">T</text>
<path d="M308.3 24.6v8.0 M307.1 26.0l1.2-1.5 1.2 1.5 M307.1 31.2l1.2 1.5 1.2-1.5" fill="none" stroke="#d0d0d0" stroke-width="0.60"/>
<rect x="320.30" y="22.80" width="46.70" height="11.10" fill="#464646" rx="1.50" stroke="#6e6e6e" stroke-width="0.95"/>
<line x1="328.80" y1="22.80" x2="328.80" y2="33.90" stroke="#6e6e6e" stroke-width="0.80"/>
<path d="M322.45 26.55 L324.30 24.75 L326.15 26.55" fill="none" stroke="#d8d8d8" stroke-width="0.80" stroke-linecap="round" stroke-linejoin="round"/>
<path d="M322.45 30.15 L324.30 31.95 L326.15 30.15" fill="none" stroke="#d8d8d8" stroke-width="0.80" stroke-linecap="round" stroke-linejoin="round"/>
<line x1="356.90" y1="22.80" x2="356.90" y2="33.90" stroke="#6e6e6e" stroke-width="0.80"/>
<path d="M360.25 27.55 L362.20 29.55 L364.15 27.55" fill="none" stroke="#d8d8d8" stroke-width="0.90" stroke-linecap="round" stroke-linejoin="round"/>
<text x="331.00" y="30.82" font-size="6.90" fill="#e4e4e4" stroke="#e4e4e4" stroke-width="0.13" textLength="14.00" lengthAdjust="spacingAndGlyphs">100%</text>
<text x="308.00" y="45.43" font-size="6.80" fill="#d0d0d0" stroke="#d0d0d0" stroke-width="0.13" textLength="5.00" lengthAdjust="spacingAndGlyphs">A</text>
<text x="313.00" y="43.05" font-size="5.00" fill="#d0d0d0" stroke="#d0d0d0" stroke-width="0.13" style='font-family:"Liberation Serif", serif' textLength="3.00" lengthAdjust="spacingAndGlyphs">a</text>
<path d="M308 46.8h9.4 M315.2 44v3.6" fill="none" stroke="#d0d0d0" stroke-width="0.55"/>
<rect x="320.30" y="37.70" width="46.70" height="10.50" fill="#464646" rx="1.50" stroke="#6e6e6e" stroke-width="0.95"/>
<line x1="328.80" y1="37.70" x2="328.80" y2="48.20" stroke="#6e6e6e" stroke-width="0.80"/>
<path d="M322.45 41.15 L324.30 39.35 L326.15 41.15" fill="none" stroke="#d8d8d8" stroke-width="0.80" stroke-linecap="round" stroke-linejoin="round"/>
<path d="M322.45 44.75 L324.30 46.55 L326.15 44.75" fill="none" stroke="#d8d8d8" stroke-width="0.80" stroke-linecap="round" stroke-linejoin="round"/>
<text x="331.00" y="45.82" font-size="6.90" fill="#e4e4e4" stroke="#e4e4e4" stroke-width="0.13" textLength="12.00" lengthAdjust="spacingAndGlyphs">0 pt</text>
<text x="372.00" y="30.50" font-size="10.60" fill="#d0d0d0" stroke="#d0d0d0" stroke-width="0.13" style='font-family:"Liberation Serif", serif' textLength="8.40" lengthAdjust="spacingAndGlyphs">T</text>
<path d="M371.4 32.6h9 M372.5 31.7l-1.1 0.9 1.1 0.9 M379.3 31.7l1.1 0.9-1.1 0.9" fill="none" stroke="#d0d0d0" stroke-width="0.55"/>
<rect x="384.00" y="22.80" width="46.80" height="11.10" fill="#464646" rx="1.50" stroke="#6e6e6e" stroke-width="0.95"/>
<line x1="392.50" y1="22.80" x2="392.50" y2="33.90" stroke="#6e6e6e" stroke-width="0.80"/>
<path d="M386.15 26.55 L388.00 24.75 L389.85 26.55" fill="none" stroke="#d8d8d8" stroke-width="0.80" stroke-linecap="round" stroke-linejoin="round"/>
<path d="M386.15 30.15 L388.00 31.95 L389.85 30.15" fill="none" stroke="#d8d8d8" stroke-width="0.80" stroke-linecap="round" stroke-linejoin="round"/>
<line x1="421.30" y1="22.80" x2="421.30" y2="33.90" stroke="#6e6e6e" stroke-width="0.80"/>
<path d="M424.35 27.55 L426.30 29.55 L428.25 27.55" fill="none" stroke="#d8d8d8" stroke-width="0.90" stroke-linecap="round" stroke-linejoin="round"/>
<text x="394.80" y="30.82" font-size="6.90" fill="#e4e4e4" stroke="#e4e4e4" stroke-width="0.13" textLength="14.00" lengthAdjust="spacingAndGlyphs">100%</text>
<text x="372.40" y="45.77" font-size="9.60" fill="#d0d0d0" stroke="#d0d0d0" stroke-width="0.13" style='font-family:"Liberation Serif", serif' font-style="italic" textLength="8.00" lengthAdjust="spacingAndGlyphs">T</text>
<rect x="384.00" y="37.70" width="46.80" height="10.50" fill="#464646" rx="1.50" stroke="#6e6e6e" stroke-width="0.95"/>
<line x1="392.50" y1="37.70" x2="392.50" y2="48.20" stroke="#6e6e6e" stroke-width="0.80"/>
<path d="M386.15 41.15 L388.00 39.35 L389.85 41.15" fill="none" stroke="#d8d8d8" stroke-width="0.80" stroke-linecap="round" stroke-linejoin="round"/>
<path d="M386.15 44.75 L388.00 46.55 L389.85 44.75" fill="none" stroke="#d8d8d8" stroke-width="0.80" stroke-linecap="round" stroke-linejoin="round"/>
<text x="394.80" y="45.82" font-size="6.90" fill="#e4e4e4" stroke="#e4e4e4" stroke-width="0.13" textLength="5.80" lengthAdjust="spacingAndGlyphs">0°</text>
<line x1="435.00" y1="21.50" x2="435.00" y2="49.50" stroke="#494949" stroke-width="0.70"/>
<text x="441.90" y="31.57" font-size="9.40" fill="#d0d0d0" stroke="#d0d0d0" stroke-width="0.13" textLength="6.90" lengthAdjust="spacingAndGlyphs">A</text>
<rect x="449.80" y="30.60" width="1.00" height="1.00" fill="#d0d0d0"/>
<rect x="457.80" y="22.60" width="79.20" height="11.50" fill="#e2e2e2" rx="1.00"/>
<rect x="536.90" y="22.70" width="10.30" height="11.30" fill="#464646" rx="1.50" stroke="#6e6e6e" stroke-width="0.80"/>
<path d="M540.15 27.55 L542.10 29.55 L544.05 27.55" fill="none" stroke="#d8d8d8" stroke-width="0.90" stroke-linecap="round" stroke-linejoin="round"/>
<text x="461.90" y="30.82" font-size="6.90" fill="#555555" stroke="#555555" stroke-width="0.13" textLength="18.10" lengthAdjust="spacingAndGlyphs">[None]</text>
<rect x="458.30" y="37.70" width="88.50" height="10.50" fill="#464646" rx="1.50" stroke="#6e6e6e" stroke-width="0.95"/>
<path d="M540.15 42.15 L542.10 44.15 L544.05 42.15" fill="none" stroke="#d8d8d8" stroke-width="0.90" stroke-linecap="round" stroke-linejoin="round"/>
<text x="459.80" y="45.82" font-size="6.90" fill="#e4e4e4" stroke="#e4e4e4" stroke-width="0.13" textLength="29.70" lengthAdjust="spacingAndGlyphs">English: UK</text>
<line x1="550.40" y1="21.50" x2="550.40" y2="49.50" stroke="#494949" stroke-width="0.70"/>
<line x1="556.90" y1="21.50" x2="556.90" y2="49.50" stroke="#494949" stroke-width="0.70"/>
<rect x="560.60" y="22.10" width="12.20" height="12.00" fill="#2d2d2d" rx="1.20"/>
<line x1="562.60" y1="25.00" x2="571.00" y2="25.00" stroke="#e8e8e8" stroke-width="0.75"/>
<line x1="562.60" y1="26.75" x2="568.20" y2="26.75" stroke="#e8e8e8" stroke-width="0.75"/>
<line x1="562.60" y1="28.50" x2="571.00" y2="28.50" stroke="#e8e8e8" stroke-width="0.75"/>
<line x1="562.60" y1="30.25" x2="568.20" y2="30.25" stroke="#e8e8e8" stroke-width="0.75"/>
<line x1="562.60" y1="32.00" x2="571.00" y2="32.00" stroke="#e8e8e8" stroke-width="0.75"/>
<line x1="577.40" y1="25.00" x2="586.80" y2="25.00" stroke="#d0d0d0" stroke-width="0.75"/>
<line x1="579.10" y1="26.75" x2="585.10" y2="26.75" stroke="#d0d0d0" stroke-width="0.75"/>
<line x1="577.40" y1="28.50" x2="586.80" y2="28.50" stroke="#d0d0d0" stroke-width="0.75"/>
<line x1="579.10" y1="30.25" x2="585.10" y2="30.25" stroke="#d0d0d0" stroke-width="0.75"/>
<line x1="577.40" y1="32.00" x2="586.80" y2="32.00" stroke="#d0d0d0" stroke-width="0.75"/>
<line x1="592.60" y1="25.00" x2="601.40" y2="25.00" stroke="#d0d0d0" stroke-width="0.75"/>
<line x1="595.40" y1="26.75" x2="601.40" y2="26.75" stroke="#d0d0d0" stroke-width="0.75"/>
<line x1="592.60" y1="28.50" x2="601.40" y2="28.50" stroke="#d0d0d0" stroke-width="0.75"/>
<line x1="595.40" y1="30.25" x2="601.40" y2="30.25" stroke="#d0d0d0" stroke-width="0.75"/>
<line x1="592.60" y1="32.00" x2="601.40" y2="32.00" stroke="#d0d0d0" stroke-width="0.75"/>
<line x1="608.00" y1="25.00" x2="615.40" y2="25.00" stroke="#d0d0d0" stroke-width="0.75"/>
<line x1="610.40" y1="26.75" x2="615.40" y2="26.75" stroke="#d0d0d0" stroke-width="0.75"/>
<line x1="608.00" y1="28.50" x2="615.40" y2="28.50" stroke="#d0d0d0" stroke-width="0.75"/>
<line x1="610.40" y1="30.25" x2="615.40" y2="30.25" stroke="#d0d0d0" stroke-width="0.75"/>
<line x1="608.00" y1="32.00" x2="615.40" y2="32.00" stroke="#d0d0d0" stroke-width="0.75"/>
<line x1="616.60" y1="24.00" x2="616.60" y2="33.00" stroke="#d0d0d0" stroke-width="0.70"/>
<line x1="562.80" y1="39.60" x2="570.80" y2="39.60" stroke="#d0d0d0" stroke-width="0.75"/>
<line x1="562.80" y1="41.35" x2="570.80" y2="41.35" stroke="#d0d0d0" stroke-width="0.75"/>
<line x1="562.80" y1="43.10" x2="570.80" y2="43.10" stroke="#d0d0d0" stroke-width="0.75"/>
<line x1="562.80" y1="44.85" x2="570.80" y2="44.85" stroke="#d0d0d0" stroke-width="0.75"/>
<line x1="562.80" y1="46.60" x2="568.00" y2="46.60" stroke="#d0d0d0" stroke-width="0.75"/>
<line x1="577.80" y1="39.60" x2="585.80" y2="39.60" stroke="#d0d0d0" stroke-width="0.75"/>
<line x1="577.80" y1="41.35" x2="585.80" y2="41.35" stroke="#d0d0d0" stroke-width="0.75"/>
<line x1="577.80" y1="43.10" x2="585.80" y2="43.10" stroke="#d0d0d0" stroke-width="0.75"/>
<line x1="577.80" y1="44.85" x2="585.80" y2="44.85" stroke="#d0d0d0" stroke-width="0.75"/>
<line x1="579.20" y1="46.60" x2="584.40" y2="46.60" stroke="#d0d0d0" stroke-width="0.75"/>
<line x1="592.80" y1="39.60" x2="600.80" y2="39.60" stroke="#d0d0d0" stroke-width="0.75"/>
<line x1="592.80" y1="41.35" x2="600.80" y2="41.35" stroke="#d0d0d0" stroke-width="0.75"/>
<line x1="592.80" y1="43.10" x2="600.80" y2="43.10" stroke="#d0d0d0" stroke-width="0.75"/>
<line x1="592.80" y1="44.85" x2="600.80" y2="44.85" stroke="#d0d0d0" stroke-width="0.75"/>
<line x1="592.80" y1="46.60" x2="600.80" y2="46.60" stroke="#d0d0d0" stroke-width="0.75"/>
<line x1="608.20" y1="39.60" x2="615.20" y2="39.60" stroke="#d0d0d0" stroke-width="0.75"/>
<line x1="608.20" y1="41.35" x2="615.20" y2="41.35" stroke="#d0d0d0" stroke-width="0.75"/>
<line x1="608.20" y1="43.10" x2="615.20" y2="43.10" stroke="#d0d0d0" stroke-width="0.75"/>
<line x1="608.20" y1="44.85" x2="615.20" y2="44.85" stroke="#d0d0d0" stroke-width="0.75"/>
<line x1="608.20" y1="46.60" x2="612.80" y2="46.60" stroke="#d0d0d0" stroke-width="0.75"/>
<line x1="616.60" y1="38.80" x2="616.60" y2="47.60" stroke="#d0d0d0" stroke-width="0.70"/>
<line x1="622.80" y1="21.50" x2="622.80" y2="49.50" stroke="#494949" stroke-width="0.70"/>
<line x1="629.40" y1="25.00" x2="634.60" y2="25.00" stroke="#d0d0d0" stroke-width="0.75"/>
<line x1="629.40" y1="26.75" x2="633.20" y2="26.75" stroke="#d0d0d0" stroke-width="0.75"/>
<line x1="629.40" y1="28.50" x2="634.60" y2="28.50" stroke="#d0d0d0" stroke-width="0.75"/>
<line x1="629.40" y1="30.25" x2="633.20" y2="30.25" stroke="#d0d0d0" stroke-width="0.75"/>
<line x1="629.40" y1="32.00" x2="634.60" y2="32.00" stroke="#d0d0d0" stroke-width="0.75"/>
<line x1="629.00" y1="24.00" x2="629.00" y2="33.00" stroke="#d0d0d0" stroke-width="0.60"/>
<path d="M625.8 28.4h2.4 M627 27.4l1.2 1-1.2 1" fill="none" stroke="#d0d0d0" stroke-width="0.60"/>
<rect x="638.00" y="22.80" width="47.10" height="11.10" fill="#464646" rx="1.50" stroke="#6e6e6e" stroke-width="0.95"/>
<line x1="646.90" y1="22.80" x2="646.90" y2="33.90" stroke="#6e6e6e" stroke-width="0.80"/>
<path d="M640.35 26.55 L642.20 24.75 L644.05 26.55" fill="none" stroke="#d8d8d8" stroke-width="0.80" stroke-linecap="round" stroke-linejoin="round"/>
<path d="M640.35 30.15 L642.20 31.95 L644.05 30.15" fill="none" stroke="#d8d8d8" stroke-width="0.80" stroke-linecap="round" stroke-linejoin="round"/>
<text x="649.80" y="30.82" font-size="6.90" fill="#e4e4e4" stroke="#e4e4e4" stroke-width="0.13" textLength="15.20" lengthAdjust="spacingAndGlyphs">0 mm</text>
<line x1="689.60" y1="25.00" x2="693.40" y2="25.00" stroke="#d0d0d0" stroke-width="0.75"/>
<line x1="690.40" y1="26.75" x2="693.40" y2="26.75" stroke="#d0d0d0" stroke-width="0.75"/>
<line x1="689.60" y1="28.50" x2="693.40" y2="28.50" stroke="#d0d0d0" stroke-width="0.75"/>
<line x1="690.40" y1="30.25" x2="693.40" y2="30.25" stroke="#d0d0d0" stroke-width="0.75"/>
<line x1="689.60" y1="32.00" x2="693.40" y2="32.00" stroke="#d0d0d0" stroke-width="0.75"/>
<line x1="694.20" y1="24.00" x2="694.20" y2="33.00" stroke="#d0d0d0" stroke-width="0.60"/>
<path d="M695.0 28.4h2.8 M696.2 27.4l-1.2 1 1.2 1" fill="none" stroke="#d0d0d0" stroke-width="0.60"/>
<rect x="701.80" y="22.80" width="47.10" height="11.10" fill="#464646" rx="1.50" stroke="#6e6e6e" stroke-width="0.95"/>
<line x1="710.30" y1="22.80" x2="710.30" y2="33.90" stroke="#6e6e6e" stroke-width="0.80"/>
<path d="M703.95 26.55 L705.80 24.75 L707.65 26.55" fill="none" stroke="#d8d8d8" stroke-width="0.80" stroke-linecap="round" stroke-linejoin="round"/>
<path d="M703.95 30.15 L705.80 31.95 L707.65 30.15" fill="none" stroke="#d8d8d8" stroke-width="0.80" stroke-linecap="round" stroke-linejoin="round"/>
<text x="713.10" y="30.82" font-size="6.90" fill="#e4e4e4" stroke="#e4e4e4" stroke-width="0.13" textLength="15.20" lengthAdjust="spacingAndGlyphs">0 mm</text>
<line x1="629.40" y1="39.60" x2="635.00" y2="39.60" stroke="#d0d0d0" stroke-width="0.75"/>
<line x1="630.80" y1="41.35" x2="635.00" y2="41.35" stroke="#d0d0d0" stroke-width="0.75"/>
<line x1="630.80" y1="43.10" x2="636.40" y2="43.10" stroke="#d0d0d0" stroke-width="0.75"/>
<line x1="630.80" y1="44.85" x2="635.00" y2="44.85" stroke="#d0d0d0" stroke-width="0.75"/>
<line x1="630.80" y1="46.60" x2="636.40" y2="46.60" stroke="#d0d0d0" stroke-width="0.75"/>
<path d="M626 38.6h2.6 M627.4 37.7l1.2 0.9-1.2 0.9" fill="none" stroke="#d0d0d0" stroke-width="0.60"/>
<rect x="638.00" y="37.70" width="47.10" height="10.50" fill="#464646" rx="1.50" stroke="#6e6e6e" stroke-width="0.95"/>
<line x1="646.90" y1="37.70" x2="646.90" y2="48.20" stroke="#6e6e6e" stroke-width="0.80"/>
<path d="M640.35 41.15 L642.20 39.35 L644.05 41.15" fill="none" stroke="#d8d8d8" stroke-width="0.80" stroke-linecap="round" stroke-linejoin="round"/>
<path d="M640.35 44.75 L642.20 46.55 L644.05 44.75" fill="none" stroke="#d8d8d8" stroke-width="0.80" stroke-linecap="round" stroke-linejoin="round"/>
<text x="649.80" y="45.82" font-size="6.90" fill="#e4e4e4" stroke="#e4e4e4" stroke-width="0.13" textLength="15.20" lengthAdjust="spacingAndGlyphs">0 mm</text>
<line x1="689.60" y1="39.60" x2="694.60" y2="39.60" stroke="#d0d0d0" stroke-width="0.75"/>
<line x1="689.60" y1="41.35" x2="694.60" y2="41.35" stroke="#d0d0d0" stroke-width="0.75"/>
<line x1="689.60" y1="43.10" x2="694.60" y2="43.10" stroke="#d0d0d0" stroke-width="0.75"/>
<line x1="689.60" y1="44.85" x2="694.60" y2="44.85" stroke="#d0d0d0" stroke-width="0.75"/>
<line x1="689.60" y1="46.60" x2="692.80" y2="46.60" stroke="#d0d0d0" stroke-width="0.75"/>
<path d="M695.2 46.6h2.8 M696.6 45.2v2.8" fill="none" stroke="#d0d0d0" stroke-width="0.60"/>
<rect x="701.80" y="37.70" width="47.10" height="10.50" fill="#464646" rx="1.50" stroke="#6e6e6e" stroke-width="0.95"/>
<line x1="710.30" y1="37.70" x2="710.30" y2="48.20" stroke="#6e6e6e" stroke-width="0.80"/>
<path d="M703.95 41.15 L705.80 39.35 L707.65 41.15" fill="none" stroke="#d8d8d8" stroke-width="0.80" stroke-linecap="round" stroke-linejoin="round"/>
<path d="M703.95 44.75 L705.80 46.55 L707.65 44.75" fill="none" stroke="#d8d8d8" stroke-width="0.80" stroke-linecap="round" stroke-linejoin="round"/>
<text x="713.10" y="45.82" font-size="6.90" fill="#e4e4e4" stroke="#e4e4e4" stroke-width="0.13" textLength="15.20" lengthAdjust="spacingAndGlyphs">0 mm</text>
<line x1="753.20" y1="21.50" x2="753.20" y2="49.50" stroke="#494949" stroke-width="0.70"/>
<rect x="759.40" y="25.00" width="5.60" height="2.60" fill="none" stroke="#d0d0d0" stroke-width="0.60"/>
<line x1="760.00" y1="29.60" x2="765.40" y2="29.60" stroke="#d0d0d0" stroke-width="0.75"/>
<line x1="760.00" y1="31.60" x2="765.40" y2="31.60" stroke="#d0d0d0" stroke-width="0.75"/>
<path d="M756.4 26.0h2.2 M757.5 24.9v2.2" fill="none" stroke="#d0d0d0" stroke-width="0.55"/>
<rect x="769.00" y="22.80" width="46.80" height="11.10" fill="#464646" rx="1.50" stroke="#6e6e6e" stroke-width="0.95"/>
<line x1="777.30" y1="22.80" x2="777.30" y2="33.90" stroke="#6e6e6e" stroke-width="0.80"/>
<path d="M771.05 26.55 L772.90 24.75 L774.75 26.55" fill="none" stroke="#d8d8d8" stroke-width="0.80" stroke-linecap="round" stroke-linejoin="round"/>
<path d="M771.05 30.15 L772.90 31.95 L774.75 30.15" fill="none" stroke="#d8d8d8" stroke-width="0.80" stroke-linecap="round" stroke-linejoin="round"/>
<text x="780.00" y="30.82" font-size="6.90" fill="#e4e4e4" stroke="#e4e4e4" stroke-width="0.13" textLength="15.20" lengthAdjust="spacingAndGlyphs">0 mm</text>
<line x1="823.00" y1="24.60" x2="828.40" y2="24.60" stroke="#d0d0d0" stroke-width="0.75"/>
<line x1="823.00" y1="26.60" x2="828.40" y2="26.60" stroke="#d0d0d0" stroke-width="0.75"/>
<rect x="823.00" y="29.00" width="5.60" height="2.80" fill="none" stroke="#d0d0d0" stroke-width="0.60"/>
<path d="M819.8 30.6h2.4 M821 29.4v2.4" fill="none" stroke="#d0d0d0" stroke-width="0.55"/>
<rect x="832.40" y="22.80" width="47.10" height="11.10" fill="#464646" rx="1.50" stroke="#6e6e6e" stroke-width="0.95"/>
<line x1="841.00" y1="22.80" x2="841.00" y2="33.90" stroke="#6e6e6e" stroke-width="0.80"/>
<path d="M834.60 26.55 L836.45 24.75 L838.30 26.55" fill="none" stroke="#d8d8d8" stroke-width="0.80" stroke-linecap="round" stroke-linejoin="round"/>
<path d="M834.60 30.15 L836.45 31.95 L838.30 30.15" fill="none" stroke="#d8d8d8" stroke-width="0.80" stroke-linecap="round" stroke-linejoin="round"/>
<text x="843.80" y="30.82" font-size="6.90" fill="#e4e4e4" stroke="#e4e4e4" stroke-width="0.13" textLength="15.20" lengthAdjust="spacingAndGlyphs">0 mm</text>
<path d="M757 39v5.4 M756.2 40l0.8-1 0.8 1 M756.2 43.4l0.8 1 0.8-1" fill="none" stroke="#d0d0d0" stroke-width="0.50"/>
<text x="758.60" y="42.99" font-size="5.00" fill="#d0d0d0" stroke="#d0d0d0" stroke-width="0.08" font-weight="bold" textLength="3.60" lengthAdjust="spacingAndGlyphs">A</text>
<line x1="762.80" y1="40.20" x2="765.60" y2="40.20" stroke="#d0d0d0" stroke-width="0.75"/>
<line x1="762.80" y1="42.10" x2="765.60" y2="42.10" stroke="#d0d0d0" stroke-width="0.75"/>
<line x1="758.80" y1="45.00" x2="765.60" y2="45.00" stroke="#d0d0d0" stroke-width="0.75"/>
<line x1="758.80" y1="46.90" x2="765.60" y2="46.90" stroke="#d0d0d0" stroke-width="0.75"/>
<rect x="769.00" y="37.70" width="46.80" height="10.50" fill="#464646" rx="1.50" stroke="#6e6e6e" stroke-width="0.95"/>
<line x1="777.30" y1="37.70" x2="777.30" y2="48.20" stroke="#6e6e6e" stroke-width="0.80"/>
<path d="M771.05 41.15 L772.90 39.35 L774.75 41.15" fill="none" stroke="#d8d8d8" stroke-width="0.80" stroke-linecap="round" stroke-linejoin="round"/>
<path d="M771.05 44.75 L772.90 46.55 L774.75 44.75" fill="none" stroke="#d8d8d8" stroke-width="0.80" stroke-linecap="round" stroke-linejoin="round"/>
<text x="780.00" y="45.82" font-size="6.90" fill="#e4e4e4" stroke="#e4e4e4" stroke-width="0.13">0</text>
<text x="820.00" y="42.99" font-size="5.00" fill="#d0d0d0" stroke="#d0d0d0" stroke-width="0.08" font-weight="bold" textLength="3.40" lengthAdjust="spacingAndGlyphs">A</text>
<text x="823.60" y="42.79" font-size="4.20" fill="#d0d0d0" stroke="#d0d0d0" stroke-width="0.08" font-weight="bold" textLength="2.00" lengthAdjust="spacingAndGlyphs">a</text>
<line x1="826.20" y1="40.20" x2="829.40" y2="40.20" stroke="#d0d0d0" stroke-width="0.75"/>
<line x1="826.20" y1="42.10" x2="829.40" y2="42.10" stroke="#d0d0d0" stroke-width="0.75"/>
<line x1="820.00" y1="45.00" x2="829.20" y2="45.00" stroke="#d0d0d0" stroke-width="0.75"/>
<line x1="820.00" y1="46.90" x2="829.20" y2="46.90" stroke="#d0d0d0" stroke-width="0.75"/>
<rect x="832.40" y="37.70" width="47.10" height="10.50" fill="#464646" rx="1.50" stroke="#6e6e6e" stroke-width="0.95"/>
<line x1="841.00" y1="37.70" x2="841.00" y2="48.20" stroke="#6e6e6e" stroke-width="0.80"/>
<path d="M834.60 41.15 L836.45 39.35 L838.30 41.15" fill="none" stroke="#d8d8d8" stroke-width="0.80" stroke-linecap="round" stroke-linejoin="round"/>
<path d="M834.60 44.75 L836.45 46.55 L838.30 44.75" fill="none" stroke="#d8d8d8" stroke-width="0.80" stroke-linecap="round" stroke-linejoin="round"/>
<text x="843.80" y="45.82" font-size="6.90" fill="#e4e4e4" stroke="#e4e4e4" stroke-width="0.13">0</text>
<line x1="883.80" y1="21.50" x2="883.80" y2="49.50" stroke="#494949" stroke-width="0.70"/>
<rect x="889.40" y="25.20" width="1.30" height="1.30" fill="#d0d0d0"/>
<line x1="892.00" y1="25.90" x2="897.80" y2="25.90" stroke="#d0d0d0" stroke-width="0.70"/>
<rect x="889.40" y="29.70" width="1.30" height="1.30" fill="#d0d0d0"/>
<rect x="892.00" y="29.40" width="5.80" height="1.90" fill="#9a9a9a"/>
<text x="889.20" y="41.29" font-size="3.60" fill="#d0d0d0" stroke="#d0d0d0" stroke-width="0.13">1</text>
<line x1="892.00" y1="40.20" x2="897.80" y2="40.20" stroke="#d0d0d0" stroke-width="0.70"/>
<text x="889.00" y="46.29" font-size="3.60" fill="#d0d0d0" stroke="#d0d0d0" stroke-width="0.13">2</text>
<rect x="892.00" y="44.30" width="5.80" height="1.90" fill="#9a9a9a"/>
<line x1="903.40" y1="21.50" x2="903.40" y2="49.50" stroke="#494949" stroke-width="0.70"/>
<rect x="907.40" y="25.20" width="5.90" height="6.40" fill="none" rx="0.90" stroke="#a0a0a0" stroke-width="0.70"/>
<rect x="907.40" y="40.60" width="5.90" height="6.40" fill="none" rx="0.90" stroke="#a0a0a0" stroke-width="0.70"/>
<text x="916.90" y="30.47" font-size="6.90" fill="#e4e4e4" stroke="#e4e4e4" stroke-width="0.08" font-weight="bold" textLength="21.90" lengthAdjust="spacingAndGlyphs">Shading</text>
<text x="916.90" y="46.77" font-size="6.90" fill="#e4e4e4" stroke="#e4e4e4" stroke-width="0.08" font-weight="bold" textLength="17.50" lengthAdjust="spacingAndGlyphs">Border</text>
<rect x="948.20" y="24.40" width="9.60" height="9.00" fill="#8a8a8a"/>
<rect x="948.70" y="24.90" width="2.50" height="2.30" fill="#cfcfcf"/>
<rect x="948.70" y="27.80" width="2.50" height="2.30" fill="#cfcfcf"/>
<rect x="948.70" y="30.70" width="2.50" height="2.30" fill="#cfcfcf"/>
<rect x="951.80" y="24.90" width="2.50" height="2.30" fill="#9c9c9c"/>
<rect x="951.80" y="27.80" width="2.50" height="2.30" fill="#4e4e4e"/>
<rect x="951.80" y="30.70" width="2.50" height="2.30" fill="#4e4e4e"/>
<rect x="954.90" y="24.90" width="2.50" height="2.30" fill="#9c9c9c"/>
<rect x="954.90" y="27.80" width="2.50" height="2.30" fill="#4e4e4e"/>
<rect x="954.90" y="30.70" width="2.50" height="2.30" fill="#4e4e4e"/>
<path d="M949.0 49.6v-8.2q0-1 1-1h7.6" fill="none" stroke="#d8d8d8" stroke-width="0.80"/>
<path d="M952.4 49.6v-5.4h5.2" fill="none" stroke="#d8d8d8" stroke-width="0.90"/>
<rect x="955.00" y="46.40" width="2.80" height="3.20" fill="#d8d8d8"/>
<rect x="961.30" y="22.90" width="50.20" height="10.90" fill="#5b5b5b" rx="1.50"/>
<rect x="961.30" y="22.90" width="39.70" height="10.90" fill="#dedede" rx="1.00"/>
<rect x="964.10" y="25.10" width="6.00" height="6.50" fill="#3c3c3c" stroke="#707070" stroke-width="0.50"/>
<text x="972.20" y="30.62" font-size="6.90" fill="#9a9a9a" stroke="#9a9a9a" stroke-width="0.13" textLength="17.80" lengthAdjust="spacingAndGlyphs">[Black]</text>
<path d="M1004.35 27.65 L1006.30 29.65 L1008.25 27.65" fill="none" stroke="#a8a8a8" stroke-width="0.90" stroke-linecap="round" stroke-linejoin="round"/>
<rect x="961.30" y="38.80" width="50.20" height="10.90" fill="#5b5b5b" rx="1.50"/>
<rect x="961.30" y="38.80" width="39.70" height="10.90" fill="#dedede" rx="1.00"/>
<rect x="964.10" y="41.00" width="6.00" height="6.50" fill="#3c3c3c" stroke="#707070" stroke-width="0.50"/>
<text x="972.20" y="46.52" font-size="6.90" fill="#9a9a9a" stroke="#9a9a9a" stroke-width="0.13" textLength="17.80" lengthAdjust="spacingAndGlyphs">[Black]</text>
<path d="M1004.35 43.55 L1006.30 45.55 L1008.25 43.55" fill="none" stroke="#a8a8a8" stroke-width="0.90" stroke-linecap="round" stroke-linejoin="round"/>
<line x1="1014.20" y1="21.50" x2="1014.20" y2="49.50" stroke="#494949" stroke-width="0.70"/>
<line x1="1057.20" y1="21.50" x2="1057.20" y2="49.50" stroke="#494949" stroke-width="0.70"/>
<path d="M1049.6 30.6l-3.4 5.0h2.4l-1.2 4.2 3.6-5.4h-2.4z" fill="#d0d0d0"/>
<circle cx="1065.3" cy="28.2" r="1.7" fill="none" stroke="#d8d8d8" stroke-width="1.3"/>
<circle cx="1065.3" cy="28.2" r="2.7" fill="none" stroke="#d8d8d8" stroke-width="0.9" stroke-dasharray="1.0 1.12"/>
<rect x="1062.00" y="41.40" width="7.00" height="1.20" fill="#c8c8c8"/>
<rect x="1062.00" y="43.80" width="7.00" height="1.20" fill="#c8c8c8"/>
</g>
<g id="doctab">
<rect x="23.00" y="52.90" width="109.30" height="16.10" fill="#535353"/>
<line x1="132.60" y1="52.90" x2="132.60" y2="69.00" stroke="#3a3a3a" stroke-width="0.60"/>
<path d="M31.6 59.6l3 3 M34.6 59.6l-3 3" fill="none" stroke="#e0e0e0" stroke-width="0.80"/>
<text x="40.60" y="62.97" font-size="6.90" fill="#f0f0f0" stroke="#f0f0f0" stroke-width="0.08" font-weight="bold" textLength="83.80" lengthAdjust="spacingAndGlyphs">*RAVE Re Design.indd @ 60%</text>
</g>
<g id="toolbar">
<rect x="0.00" y="52.30" width="21.20" height="514.70" fill="#535353"/>
<rect x="21.20" y="69.00" width="1.80" height="498.00" fill="#484848"/>
<rect x="0.00" y="52.30" width="21.20" height="6.20" fill="#424242"/>
<path d="M3 54.2l1.2 1.1-1.2 1.1 M5.2 54.2l1.2 1.1-1.2 1.1" fill="none" stroke="#bdbdbd" stroke-width="0.50"/>
<rect x="5.20" y="61.60" width="10.60" height="1.60" fill="#454545"/>
<path d="M8.2 70.2v9l2.2-2.4h4z" fill="none" stroke="#d6d6d6" stroke-width="0.80" stroke-linejoin="round"/>
<path d="M8.2 83.4v9.2l2.3-2.5h4.1z" fill="#d6d6d6"/>
<path d="M7.2 96.8h4.2l2.2 2.2v6.6h-6.4z" fill="none" stroke="#d6d6d6" stroke-width="0.80"/>
<path d="M11.4 96.8v2.2h2.2" fill="none" stroke="#d6d6d6" stroke-width="0.60"/>
<path d="M12.2 101.8l3.2 1.7-3.2 1.7z" fill="#d6d6d6"/>
<path d="M5.8 110.8v8.4 M15.6 110.8v8.4 M7.4 115h6.6 M8.8 113.6l-1.6 1.4 1.6 1.4 M12.6 113.6l1.6 1.4-1.6 1.4" fill="none" stroke="#d6d6d6" stroke-width="0.80"/>
<path d="M7 127.6v4.8h8v-4.8 M8.6 130.2h4.8v2" fill="none" stroke="#d6d6d6" stroke-width="0.80"/>
<path d="M11 129v-2.6 M9.6 125.6l-1.6-1.6" fill="none" stroke="#d6d6d6" stroke-width="0.80"/>
<rect x="10.30" y="126.60" width="1.50" height="1.50" fill="#d6d6d6"/>
<path d="M15.8 133.6h1.5v-1.5z" fill="#d6d6d6"/>
<rect x="3.00" y="137.80" width="15.70" height="12.00" fill="#2e2e2e" rx="1.50"/>
<text x="6.90" y="147.08" font-size="12.00" fill="#f2f2f2" style='font-family:"Liberation Serif", serif' textLength="8.10" lengthAdjust="spacingAndGlyphs">T</text>
<path d="M15.8 148.2h1.5v-1.5z" fill="#d6d6d6"/>
<line x1="6.60" y1="160.80" x2="14.80" y2="153.00" stroke="#d6d6d6" stroke-width="0.90"/>
<path d="M7.0 174.6l1.0-4.2 3.6-3.2 2.8 2.8-3.2 3.6z" fill="#d6d6d6"/>
<path d="M11.2 166.6l1.4-1.2 3 3-1.2 1.4z" fill="#d6d6d6"/>
<path d="M15.8 175.6h1.5v-1.5z" fill="#d6d6d6"/>
<path d="M6.4 188.2l0.8-2.8 6.0-5.8 2.0 2.0-6.0 5.8z" fill="#d6d6d6"/>
<path d="M15.8 188.8h1.5v-1.5z" fill="#d6d6d6"/>
<rect x="6.40" y="194.00" width="8.60" height="7.60" fill="none" stroke="#d6d6d6" stroke-width="0.80"/>
<path d="M6.4 194l8.6 7.6 M15 194l-8.6 7.6" fill="none" stroke="#d6d6d6" stroke-width="0.70"/>
<path d="M15.8 202.4h1.5v-1.5z" fill="#d6d6d6"/>
<rect x="6.40" y="207.40" width="8.60" height="7.60" fill="#777" stroke="#d6d6d6" stroke-width="0.80"/>
<path d="M15.8 216.0h1.5v-1.5z" fill="#d6d6d6"/>
<line x1="0.00" y1="218.60" x2="21.00" y2="218.60" stroke="#474747" stroke-width="0.70"/>
<path d="M6.2 222.8l8 5.4 M6.2 229.4l7.6-5.0" fill="none" stroke="#d6d6d6" stroke-width="0.90"/>
<circle cx="14.4" cy="223.2" r="1.3" fill="none" stroke="#d6d6d6" stroke-width="0.7"/>
<circle cx="14.4" cy="229.0" r="1.3" fill="none" stroke="#d6d6d6" stroke-width="0.7"/>
<path d="M5.8 235.4v6.6l1.8-1.8h2.8z" fill="#d6d6d6"/>
<path d="M9.4 236.4h6.4v7.2h-6.4" fill="none" stroke="#d6d6d6" stroke-width="0.70" stroke-dasharray="1.2 0.8"/>
<path d="M15.8 244.6h1.5v-1.5z" fill="#d6d6d6"/>
<defs><linearGradient id="gr1" x1="0" y1="0" x2="1" y2="0"><stop offset="0" stop-color="#cfcfcf"/><stop offset="1" stop-color="#555"/></linearGradient><linearGradient id="gr2" x1="0" y1="0" x2="0" y2="1"><stop offset="0" stop-color="#666"/><stop offset="1" stop-color="#cfcfcf"/></linearGradient></defs>
<rect x="6.40" y="249.40" width="8.60" height="7.60" fill="url(#gr1)" stroke="#d6d6d6" stroke-width="0.70"/>
<rect x="6.40" y="263.20" width="8.60" height="7.60" fill="url(#gr2)" stroke="#d6d6d6" stroke-width="0.70"/>
<line x1="0.00" y1="274.00" x2="21.00" y2="274.00" stroke="#474747" stroke-width="0.70"/>
<rect x="6.80" y="278.20" width="8.00" height="7.40" fill="#bdbdbd" stroke="#d6d6d6" stroke-width="0.60"/>
<line x1="7.80" y1="280.60" x2="13.80" y2="280.60" stroke="#666" stroke-width="0.70"/>
<line x1="7.80" y1="282.80" x2="12.00" y2="282.80" stroke="#666" stroke-width="0.70"/>
<path d="M12.6 285.6l2.2-2.2v2.2z" fill="#555"/>
<path d="M6.2 300.6l0.6-2.2 4.8-4.8 1.6 1.6-4.8 4.8z" fill="none" stroke="#d6d6d6" stroke-width="0.70"/>
<path d="M11.2 292.8l1.6-1.6q1-0.6 1.8 0.2t0.2 1.8l-1.6 1.6z" fill="#d6d6d6"/>
<path d="M11 299.4h5.6" fill="none" stroke="#d6d6d6" stroke-width="0.80" stroke-dasharray="1 0.5"/>
<path d="M16 300.8h1.5v-1.5z" fill="#d6d6d6"/>
<path d="M7.4 309.2v-3.6q0.5-0.8 1 0v2.8v-4.2q0.55-0.8 1.1 0v4v-4.8q0.55-0.8 1.1 0v4.8v-4q0.55-0.8 1.1 0v5.2l1.2-1.8q0.9-0.5 1 0.4l-2 3.8q-0.6 1.2-1.6 1.4h-2.4q-1.4-0.6-1.5-2.4z" fill="#d6d6d6"/>
<circle cx="9.6" cy="321.2" r="3.0" fill="none" stroke="#d6d6d6" stroke-width="0.9"/>
<line x1="11.80" y1="323.60" x2="15.00" y2="326.80" stroke="#d6d6d6" stroke-width="1.20"/>
<line x1="0.00" y1="330.40" x2="21.00" y2="330.40" stroke="#474747" stroke-width="0.70"/>
<rect x="3.20" y="333.00" width="3.60" height="3.60" fill="#ffffff" stroke="#333" stroke-width="0.30"/>
<rect x="5.00" y="334.80" width="3.60" height="3.60" fill="#222" stroke="#ddd" stroke-width="0.50"/>
<path d="M3.4 336.4l3-3" fill="none" stroke="#e02020" stroke-width="0.60"/>
<path d="M13.8 335h2.8v3.6 M14.8 334l-1.2 1 1.2 1 M15.6 337.6l1 1.2 1-1.2" fill="none" stroke="#d6d6d6" stroke-width="0.60"/>
<rect x="8.20" y="347.30" width="10.50" height="10.40" fill="#ffffff"/>
<rect x="10.90" y="350.00" width="5.10" height="5.00" fill="#454545"/>
<path d="M8.6 357.3l9.8-9.6" fill="none" stroke="#ee1c1c" stroke-width="1.00"/>
<rect x="10.90" y="350.00" width="5.10" height="5.00" fill="#454545" opacity="0.0"/>
<rect x="2.80" y="342.30" width="10.70" height="10.40" fill="#ffffff" stroke="#4a4a4a" stroke-width="0.40"/>
<path d="M3.0 352.4l10.2-9.8" fill="none" stroke="#ee1c1c" stroke-width="1.10"/>
<rect x="3.00" y="362.20" width="7.60" height="7.60" fill="#3a3a3a" rx="1.00"/>
<rect x="4.60" y="364.00" width="4.40" height="4.00" fill="none" stroke="#d6d6d6" stroke-width="0.70"/>
<text x="13.00" y="368.02" font-size="7.40" fill="#d6d6d6" stroke="#d6d6d6" stroke-width="0.08" font-weight="bold" style='font-family:"Liberation Serif", serif' textLength="5.00" lengthAdjust="spacingAndGlyphs">T</text>
<rect x="3.00" y="373.00" width="15.60" height="12.60" fill="#3a3a3a" rx="1.20"/>
<rect x="6.60" y="375.70" width="8.40" height="7.30" fill="#ffffff"/>
<path d="M6.8 382.8l8-7" fill="none" stroke="#ee1c1c" stroke-width="1.00"/>
<path d="M15.8 384.4h1.5v-1.5z" fill="#d6d6d6"/>
<rect x="3.00" y="389.80" width="15.60" height="12.20" fill="#3a3a3a" rx="1.20"/>
<rect x="8.00" y="393.00" width="5.80" height="6.20" fill="#777" stroke="#d6d6d6" stroke-width="0.60"/>
<line x1="8.00" y1="394.40" x2="13.80" y2="394.40" stroke="#d6d6d6" stroke-width="0.90"/>
<path d="M15.8 400.8h1.5v-1.5z" fill="#d6d6d6"/>
</g>
<g id="vscroll">
<rect x="996.50" y="68.90" width="9.00" height="498.10" fill="#4a4a4a"/>
<rect x="1005.50" y="52.30" width="1.50" height="514.70" fill="#444444"/>
<rect x="996.90" y="86.80" width="8.30" height="200.00" fill="#6b6b6b" rx="4.00"/>
<path d="M999.20 74.10 L1001.00 72.30 L1002.80 74.10" fill="none" stroke="#c8c8c8" stroke-width="0.70" stroke-linecap="round" stroke-linejoin="round"/>
<path d="M999.20 552.90 L1001.00 554.70 L1002.80 552.90" fill="none" stroke="#c8c8c8" stroke-width="0.70" stroke-linecap="round" stroke-linejoin="round"/>
</g>
<g id="dock">
<rect x="1007.00" y="52.30" width="66.00" height="7.60" fill="#424242"/>
<path d="M1066 54.3l-1.3 1.3 1.3 1.3 M1068.6 54.3l-1.3 1.3 1.3 1.3" fill="none" stroke="#c0c0c0" stroke-width="0.50"/>
<rect x="1007.00" y="59.90" width="66.00" height="507.10" fill="#535353"/>
<rect x="1034.00" y="61.80" width="10.80" height="1.60" fill="#454545"/>
<path d="M1013 69.4h3.6v7.8h-3.6z M1018.4 69.4h3.6v7.8h-3.6z" fill="#dcdcdc"/>
<path d="M1013 70.6l1.2-1.2h2.4 M1022 70.6l-1.2-1.2h-2.4" fill="none" stroke="#535353" stroke-width="0.50"/>
<line x1="1017.50" y1="67.20" x2="1017.50" y2="78.60" stroke="#dcdcdc" stroke-width="0.50"/>
<text x="1027.50" y="75.88" font-size="7.20" fill="#f0f0f0" stroke="#f0f0f0" stroke-width="0.08" font-weight="bold" textLength="18.50" lengthAdjust="spacingAndGlyphs">Pages</text>
<rect x="1012.40" y="86.80" width="6.20" height="4.20" fill="none" rx="2.10" stroke="#dcdcdc" stroke-width="0.80"/>
<rect x="1016.60" y="86.80" width="6.20" height="4.20" fill="none" rx="2.10" stroke="#dcdcdc" stroke-width="0.80"/>
<text x="1027.50" y="91.38" font-size="7.20" fill="#f0f0f0" stroke="#f0f0f0" stroke-width="0.08" font-weight="bold" textLength="16.50" lengthAdjust="spacingAndGlyphs">Links</text>
<line x1="1007.00" y1="98.00" x2="1073.00" y2="98.00" stroke="#424242" stroke-width="1.00"/>
<rect x="1034.00" y="100.40" width="10.80" height="1.60" fill="#454545"/>
<line x1="1012.60" y1="108.40" x2="1022.40" y2="108.40" stroke="#dcdcdc" stroke-width="0.60"/>
<line x1="1012.60" y1="111.40" x2="1022.40" y2="111.40" stroke="#dcdcdc" stroke-width="1.10"/>
<line x1="1012.60" y1="114.80" x2="1022.40" y2="114.80" stroke="#dcdcdc" stroke-width="1.70"/>
<text x="1027.50" y="114.78" font-size="7.20" fill="#f0f0f0" stroke="#f0f0f0" stroke-width="0.08" font-weight="bold" textLength="20.10" lengthAdjust="spacingAndGlyphs">Stroke</text>
<ellipse cx="1017.5" cy="127.6" rx="5.2" ry="3.7" fill="#dcdcdc"/>
<circle cx="1014.8" cy="127.4" r="0.9" fill="#535353"/><circle cx="1017.0" cy="125.8" r="0.9" fill="#535353"/><circle cx="1019.8" cy="126.2" r="0.9" fill="#535353"/><circle cx="1019.6" cy="129.4" r="1.1" fill="#535353"/>
<text x="1027.50" y="130.38" font-size="7.20" fill="#f0f0f0" stroke="#f0f0f0" stroke-width="0.08" font-weight="bold" textLength="21.00" lengthAdjust="spacingAndGlyphs">Colour</text>
<line x1="1007.00" y1="137.20" x2="1073.00" y2="137.20" stroke="#424242" stroke-width="1.00"/>
<rect x="1034.00" y="139.20" width="10.80" height="1.60" fill="#454545"/>
<rect x="1012.60" y="147.00" width="9.60" height="7.00" fill="#8e8e8e" stroke="#dcdcdc" stroke-width="0.60"/>
<line x1="1012.60" y1="150.60" x2="1022.20" y2="150.60" stroke="#dcdcdc" stroke-width="0.60"/>
<line x1="1015.80" y1="147.00" x2="1015.80" y2="154.00" stroke="#dcdcdc" stroke-width="0.50"/>
<line x1="1019.00" y1="147.00" x2="1019.00" y2="154.00" stroke="#dcdcdc" stroke-width="0.50"/>
<rect x="1016.00" y="147.40" width="2.80" height="3.00" fill="#666"/>
<rect x="1019.20" y="150.80" width="2.80" height="3.00" fill="#aaa"/>
<text x="1027.50" y="153.58" font-size="7.20" fill="#f0f0f0" stroke="#f0f0f0" stroke-width="0.08" font-weight="bold" textLength="29.20" lengthAdjust="spacingAndGlyphs">Swatches</text>
<line x1="1007.00" y1="160.20" x2="1073.00" y2="160.20" stroke="#424242" stroke-width="1.00"/>
<rect x="1034.00" y="162.40" width="10.80" height="1.60" fill="#454545"/>
<rect x="1009.90" y="167.20" width="59.80" height="11.80" fill="#383838" rx="0.80"/>
<path d="M1017.6 168.9l4.9 2.6-4.9 2.6-4.9-2.6z" fill="#dadada"/>
<path d="M1012.7 175.0l4.9 2.7 4.9-2.7" fill="none" stroke="#dadada" stroke-width="1.30"/>
<text x="1027.50" y="176.58" font-size="7.20" fill="#f8f8f8" stroke="#f8f8f8" stroke-width="0.08" font-weight="bold" textLength="20.50" lengthAdjust="spacingAndGlyphs">Layers</text>
</g>
<g id="layerspanel">
<rect x="869.40" y="158.30" width="136.00" height="211.20" fill="#000" rx="0.50" opacity="0.22"/>
<rect x="870.00" y="158.80" width="135.40" height="209.80" fill="#535353"/>
<rect x="870.00" y="158.80" width="135.40" height="17.00" fill="#434343"/>
<rect x="870.00" y="158.80" width="37.30" height="19.00" fill="#535353"/>
<rect x="870.00" y="158.80" width="135.40" height="1.90" fill="#303030"/>
<path d="M875.05 168.45 L876.00 167.35 L876.95 168.45" fill="none" stroke="#bbb" stroke-width="0.50" stroke-linecap="round" stroke-linejoin="round"/>
<path d="M875.05 170.05 L876.00 171.15 L876.95 170.05" fill="none" stroke="#bbb" stroke-width="0.50" stroke-linecap="round" stroke-linejoin="round"/>
<text x="880.50" y="171.31" font-size="7.00" fill="#f0f0f0" stroke="#f0f0f0" stroke-width="0.08" font-weight="bold" textLength="20.30" lengthAdjust="spacingAndGlyphs">Layers</text>
<path d="M983.2 167.0l1.7 1.8-1.7 1.8 M985.9 167.0l1.7 1.8-1.7 1.8" fill="none" stroke="#e6e6e6" stroke-width="0.80"/>
<line x1="992.40" y1="166.40" x2="992.40" y2="172.20" stroke="#9a9a9a" stroke-width="0.60"/>
<line x1="996.40" y1="167.50" x2="1001.60" y2="167.50" stroke="#8a8a8a" stroke-width="0.70"/>
<line x1="996.40" y1="168.75" x2="1001.60" y2="168.75" stroke="#8a8a8a" stroke-width="0.70"/>
<line x1="996.40" y1="170.00" x2="1001.60" y2="170.00" stroke="#8a8a8a" stroke-width="0.70"/>
<line x1="996.40" y1="171.25" x2="1001.60" y2="171.25" stroke="#8a8a8a" stroke-width="0.70"/>
<rect x="870.00" y="178.05" width="128.40" height="173.04" fill="#535353"/>
<line x1="870.00" y1="178.05" x2="998.40" y2="178.05" stroke="#474747" stroke-width="0.70"/>
<line x1="870.00" y1="190.41" x2="998.40" y2="190.41" stroke="#474747" stroke-width="0.70"/>
<line x1="870.00" y1="202.77" x2="998.40" y2="202.77" stroke="#474747" stroke-width="0.70"/>
<line x1="870.00" y1="215.13" x2="998.40" y2="215.13" stroke="#474747" stroke-width="0.70"/>
<line x1="870.00" y1="227.49" x2="998.40" y2="227.49" stroke="#474747" stroke-width="0.70"/>
<line x1="870.00" y1="239.85" x2="998.40" y2="239.85" stroke="#474747" stroke-width="0.70"/>
<line x1="870.00" y1="252.21" x2="998.40" y2="252.21" stroke="#474747" stroke-width="0.70"/>
<line x1="870.00" y1="264.57" x2="998.40" y2="264.57" stroke="#474747" stroke-width="0.70"/>
<line x1="870.00" y1="276.93" x2="998.40" y2="276.93" stroke="#474747" stroke-width="0.70"/>
<line x1="870.00" y1="289.29" x2="998.40" y2="289.29" stroke="#474747" stroke-width="0.70"/>
<line x1="870.00" y1="301.65" x2="998.40" y2="301.65" stroke="#474747" stroke-width="0.70"/>
<line x1="870.00" y1="314.01" x2="998.40" y2="314.01" stroke="#474747" stroke-width="0.70"/>
<line x1="870.00" y1="326.37" x2="998.40" y2="326.37" stroke="#474747" stroke-width="0.70"/>
<line x1="870.00" y1="338.73" x2="998.40" y2="338.73" stroke="#474747" stroke-width="0.70"/>
<line x1="870.00" y1="351.09" x2="998.40" y2="351.09" stroke="#474747" stroke-width="0.70"/>
<line x1="882.50" y1="178.05" x2="882.50" y2="351.09" stroke="#484848" stroke-width="0.60"/>
<line x1="894.00" y1="178.05" x2="894.00" y2="351.09" stroke="#484848" stroke-width="0.60"/>
<rect x="895.90" y="178.55" width="1.60" height="11.36" fill="#4bef52"/>
<text x="915.80" y="186.39" font-size="6.60" fill="#ededed" stroke="#ededed" stroke-width="0.12" textLength="25.50" lengthAdjust="spacingAndGlyphs">&lt;STARR&gt;</text>
<rect x="989.60" y="182.78" width="3.00" height="3.00" fill="#8c8c8c" stroke="#161616" stroke-width="1.00"/>
<rect x="895.90" y="190.91" width="1.60" height="11.36" fill="#4bef52"/>
<text x="915.80" y="198.75" font-size="6.60" fill="#ededed" stroke="#ededed" stroke-width="0.12" textLength="25.80" lengthAdjust="spacingAndGlyphs">&lt;RINGO&gt;</text>
<rect x="989.60" y="195.14" width="3.00" height="3.00" fill="#8c8c8c" stroke="#161616" stroke-width="1.00"/>
<rect x="895.90" y="203.27" width="1.60" height="11.36" fill="#4bef52"/>
<text x="915.80" y="211.11" font-size="6.60" fill="#ededed" stroke="#ededed" stroke-width="0.12" textLength="26.60" lengthAdjust="spacingAndGlyphs">&lt;ALBUM&gt;</text>
<rect x="989.60" y="207.50" width="3.00" height="3.00" fill="#8c8c8c" stroke="#161616" stroke-width="1.00"/>
<rect x="895.90" y="215.63" width="1.60" height="11.36" fill="#4bef52"/>
<text x="915.80" y="223.47" font-size="6.60" fill="#ededed" stroke="#ededed" stroke-width="0.12" textLength="27.40" lengthAdjust="spacingAndGlyphs">&lt;PHOTO&gt;</text>
<rect x="989.60" y="219.86" width="3.00" height="3.00" fill="#8c8c8c" stroke="#161616" stroke-width="1.00"/>
<rect x="895.90" y="227.99" width="1.60" height="11.36" fill="#4bef52"/>
<text x="915.80" y="235.83" font-size="6.60" fill="#ededed" stroke="#ededed" stroke-width="0.12" textLength="34.40" lengthAdjust="spacingAndGlyphs">&lt;magazine&gt;</text>
<rect x="989.60" y="232.22" width="3.00" height="3.00" fill="#8c8c8c" stroke="#161616" stroke-width="1.00"/>
<rect x="895.90" y="240.35" width="1.60" height="11.36" fill="#4bef52"/>
<text x="915.80" y="248.19" font-size="6.60" fill="#ededed" stroke="#ededed" stroke-width="0.12" textLength="22.00" lengthAdjust="spacingAndGlyphs">&lt;RAVE&gt;</text>
<rect x="989.60" y="244.58" width="3.00" height="3.00" fill="#8c8c8c" stroke="#161616" stroke-width="1.00"/>
<rect x="895.90" y="252.71" width="1.60" height="11.36" fill="#4bef52"/>
<text x="915.80" y="260.55" font-size="6.60" fill="#ededed" stroke="#ededed" stroke-width="0.12" textLength="63.20" lengthAdjust="spacingAndGlyphs">&lt;5863ea...e2962.png&gt;</text>
<rect x="989.60" y="256.94" width="3.00" height="3.00" fill="#8c8c8c" stroke="#161616" stroke-width="1.00"/>
<rect x="895.90" y="265.07" width="1.60" height="11.36" fill="#4bef52"/>
<text x="915.80" y="272.91" font-size="6.60" fill="#ededed" stroke="#ededed" stroke-width="0.12" textLength="64.60" lengthAdjust="spacingAndGlyphs">&lt;586404...e2983.png&gt;</text>
<rect x="989.60" y="269.30" width="3.00" height="3.00" fill="#8c8c8c" stroke="#161616" stroke-width="1.00"/>
<rect x="895.90" y="277.43" width="1.60" height="11.36" fill="#4bef52"/>
<text x="915.80" y="285.27" font-size="6.60" fill="#ededed" stroke="#ededed" stroke-width="0.12" textLength="48.40" lengthAdjust="spacingAndGlyphs">&lt;pasted graphic&gt;</text>
<rect x="989.60" y="281.66" width="3.00" height="3.00" fill="#8c8c8c" stroke="#161616" stroke-width="1.00"/>
<path d="M872.90 283.11q3.5-3.4 7 0q-3.5 3.4-7 0z" fill="none" stroke="#dcdcdc" stroke-width="0.60"/>
<circle cx="876.40" cy="283.11" r="1.0" fill="#dcdcdc"/>
<rect x="895.90" y="289.79" width="1.60" height="11.36" fill="#4bef52"/>
<text x="915.80" y="297.63" font-size="6.60" fill="#ededed" stroke="#ededed" stroke-width="0.12" textLength="48.40" lengthAdjust="spacingAndGlyphs">&lt;pasted graphic&gt;</text>
<rect x="989.60" y="294.02" width="3.00" height="3.00" fill="#8c8c8c" stroke="#161616" stroke-width="1.00"/>
<path d="M872.90 295.47q3.5-3.4 7 0q-3.5 3.4-7 0z" fill="none" stroke="#dcdcdc" stroke-width="0.60"/>
<circle cx="876.40" cy="295.47" r="1.0" fill="#dcdcdc"/>
<rect x="895.90" y="302.15" width="1.60" height="11.36" fill="#4bef52"/>
<text x="915.80" y="309.99" font-size="6.60" fill="#ededed" stroke="#ededed" stroke-width="0.12" textLength="48.40" lengthAdjust="spacingAndGlyphs">&lt;pasted graphic&gt;</text>
<rect x="989.60" y="306.38" width="3.00" height="3.00" fill="#8c8c8c" stroke="#161616" stroke-width="1.00"/>
<path d="M872.90 307.83q3.5-3.4 7 0q-3.5 3.4-7 0z" fill="none" stroke="#dcdcdc" stroke-width="0.60"/>
<circle cx="876.40" cy="307.83" r="1.0" fill="#dcdcdc"/>
<rect x="895.90" y="314.51" width="1.60" height="11.36" fill="#4bef52"/>
<text x="915.80" y="322.35" font-size="6.60" fill="#ededed" stroke="#ededed" stroke-width="0.12" textLength="48.40" lengthAdjust="spacingAndGlyphs">&lt;pasted graphic&gt;</text>
<rect x="989.60" y="318.74" width="3.00" height="3.00" fill="#8c8c8c" stroke="#161616" stroke-width="1.00"/>
<path d="M872.90 320.19q3.5-3.4 7 0q-3.5 3.4-7 0z" fill="none" stroke="#dcdcdc" stroke-width="0.60"/>
<circle cx="876.40" cy="320.19" r="1.0" fill="#dcdcdc"/>
<rect x="895.90" y="326.87" width="1.60" height="11.36" fill="#4bef52"/>
<text x="915.80" y="334.71" font-size="6.60" fill="#ededed" stroke="#ededed" stroke-width="0.12" textLength="33.20" lengthAdjust="spacingAndGlyphs">&lt;rectangle&gt;</text>
<rect x="989.60" y="331.10" width="3.00" height="3.00" fill="#8c8c8c" stroke="#161616" stroke-width="1.00"/>
<path d="M872.90 332.55q3.5-3.4 7 0q-3.5 3.4-7 0z" fill="none" stroke="#dcdcdc" stroke-width="0.60"/>
<circle cx="876.40" cy="332.55" r="1.0" fill="#dcdcdc"/>
<rect x="895.60" y="339.03" width="2.00" height="11.76" fill="#e01b1b"/>
<path d="M901.70 344.31 L903.20 345.91 L904.70 344.31" fill="none" stroke="#d0d0d0" stroke-width="0.60" stroke-linecap="round" stroke-linejoin="round"/>
<text x="908.80" y="347.07" font-size="6.60" fill="#ededed" stroke="#ededed" stroke-width="0.13" textLength="19.30" lengthAdjust="spacingAndGlyphs">Layer 2</text>
<rect x="989.60" y="343.46" width="3.00" height="3.00" fill="#8c8c8c" stroke="#161616" stroke-width="1.00"/>
<path d="M872.90 344.91q3.5-3.4 7 0q-3.5 3.4-7 0z" fill="none" stroke="#dcdcdc" stroke-width="0.60"/>
<circle cx="876.40" cy="344.91" r="1.0" fill="#dcdcdc"/>
<rect x="998.40" y="178.05" width="6.40" height="173.04" fill="#4a4a4a"/>
<rect x="999.40" y="194.60" width="4.20" height="131.00" fill="#6d6d6d" rx="2.10"/>
<path d="M999.90 181.95 L1001.40 180.45 L1002.90 181.95" fill="none" stroke="#bdbdbd" stroke-width="0.60" stroke-linecap="round" stroke-linejoin="round"/>
<path d="M999.90 346.85 L1001.40 348.35 L1002.90 346.85" fill="none" stroke="#bdbdbd" stroke-width="0.60" stroke-linecap="round" stroke-linejoin="round"/>
<line x1="870.00" y1="351.00" x2="1005.40" y2="351.00" stroke="#454545" stroke-width="0.80"/>
<text x="873.00" y="359.36" font-size="6.60" fill="#e6e6e6" stroke="#e6e6e6" stroke-width="0.13" textLength="46.20" lengthAdjust="spacingAndGlyphs">Page: 1, 3 Layers</text>
<path d="M970.8 354.2h5.4v5.2h-3.6l-1.8-1.8z" fill="#d4d4d4"/>
<path d="M970.8 357.6h1.8v1.8" fill="none" stroke="#666" stroke-width="0.50"/>
<path d="M986.4 355.4h5.0l-0.5 5.0h-4.0z" fill="#a2a2a2"/>
<line x1="985.80" y1="354.90" x2="992.00" y2="354.90" stroke="#a8a8a8" stroke-width="0.80"/>
<line x1="988.00" y1="354.00" x2="989.80" y2="354.00" stroke="#a8a8a8" stroke-width="0.70"/>
<line x1="870.00" y1="363.70" x2="1005.40" y2="363.70" stroke="#444" stroke-width="0.90"/>
<rect x="870.00" y="364.20" width="135.40" height="4.40" fill="#4d4d4d"/>
<rect x="932.80" y="365.60" width="6.40" height="1.30" fill="#424242"/>
</g>
<g id="statusbar">
<rect x="23.00" y="558.60" width="973.50" height="8.40" fill="#535353"/>
<rect x="23.00" y="557.90" width="8.50" height="0.80" fill="#535353"/>
<line x1="23.00" y1="558.90" x2="996.50" y2="558.90" stroke="#464646" stroke-width="0.80"/>
<rect x="276.00" y="558.80" width="720.50" height="8.20" fill="#444444"/>
<rect x="404.00" y="559.30" width="570.50" height="8.00" fill="#646464" rx="4.00"/>
<path d="M30.3 560.5v4.8" fill="none" stroke="#8c8c8c" stroke-width="0.90"/>
<path d="M34.6 560.5v4.8l-3.0-2.4z" fill="#8c8c8c"/>
<path d="M45.1 560.5v4.8l-3.0-2.4z" fill="#8c8c8c"/>
<rect x="53.40" y="559.00" width="38.50" height="8.00" fill="#3e3e3e"/>
<text x="54.80" y="564.97" font-size="6.90" fill="#f0f0f0" stroke="#f0f0f0" stroke-width="0.13">1</text>
<rect x="92.30" y="559.00" width="10.20" height="8.00" fill="#464646" stroke="#606060" stroke-width="0.60"/>
<path d="M95.70 561.30 L97.40 563.10 L99.10 561.30" fill="none" stroke="#d8d8d8" stroke-width="0.90" stroke-linecap="round" stroke-linejoin="round"/>
<path d="M110.2 560.4v5l2.8-2.5z" fill="#d8d8d8"/>
<path d="M120.8 560.4v5l2.8-2.5z" fill="#d8d8d8"/>
<path d="M124.6 560.4v5" fill="none" stroke="#d8d8d8" stroke-width="0.90"/>
<path d="M136.6 565.2v-2.2a2.6 2.6 0 0 1 5.2 0v2.2" fill="none" stroke="#d0d0d0" stroke-width="1.2"/>
<path d="M139.2 560.6v2.4" fill="none" stroke="#d0d0d0" stroke-width="0.80"/>
<rect x="143.20" y="565.00" width="1.40" height="0.80" fill="#d0d0d0"/>
<text x="153.00" y="564.67" font-size="6.90" fill="#ececec" stroke="#ececec" stroke-width="0.13" textLength="45.00" lengthAdjust="spacingAndGlyphs">[Basic] (working)</text>
<path d="M211.10 561.10 L212.80 562.90 L214.50 561.10" fill="none" stroke="#d8d8d8" stroke-width="0.90" stroke-linecap="round" stroke-linejoin="round"/>
<circle cx="226.6" cy="562.4" r="3.0" fill="#ea2f2f"/>
<text x="233.00" y="564.67" font-size="6.90" fill="#ececec" stroke="#ececec" stroke-width="0.13" textLength="21.40" lengthAdjust="spacingAndGlyphs">6 errors</text>
<path d="M268.90 561.10 L270.60 562.90 L272.30 561.10" fill="none" stroke="#d8d8d8" stroke-width="0.90" stroke-linecap="round" stroke-linejoin="round"/>
<line x1="275.80" y1="558.00" x2="275.80" y2="567.00" stroke="#4c4c4c" stroke-width="0.80"/>
<path d="M281.0 560.4l-1.6 2 1.6 2" fill="none" stroke="#777" stroke-width="0.60"/>
<rect x="219.00" y="564.80" width="633.00" height="2.40" fill="#969696" rx="1.20"/>
<path d="M978.6 560.6l1.4 1.9-1.4 1.9" fill="none" stroke="#a8a8a8" stroke-width="0.60"/>
<rect x="984.00" y="558.80" width="12.50" height="8.20" fill="#535353"/>
<rect x="986.60" y="560.00" width="8.20" height="5.40" fill="none" stroke="#d0d0d0" stroke-width="0.70"/>
<line x1="990.70" y1="560.00" x2="990.70" y2="565.40" stroke="#d0d0d0" stroke-width="0.70"/>
<rect x="996.50" y="558.60" width="9.00" height="8.40" fill="#4a4a4a"/>
<path d="M1004.6 560.2v6.2h-6.2z" fill="#5a5a5a"/>
</g>
</svg></body></html>
